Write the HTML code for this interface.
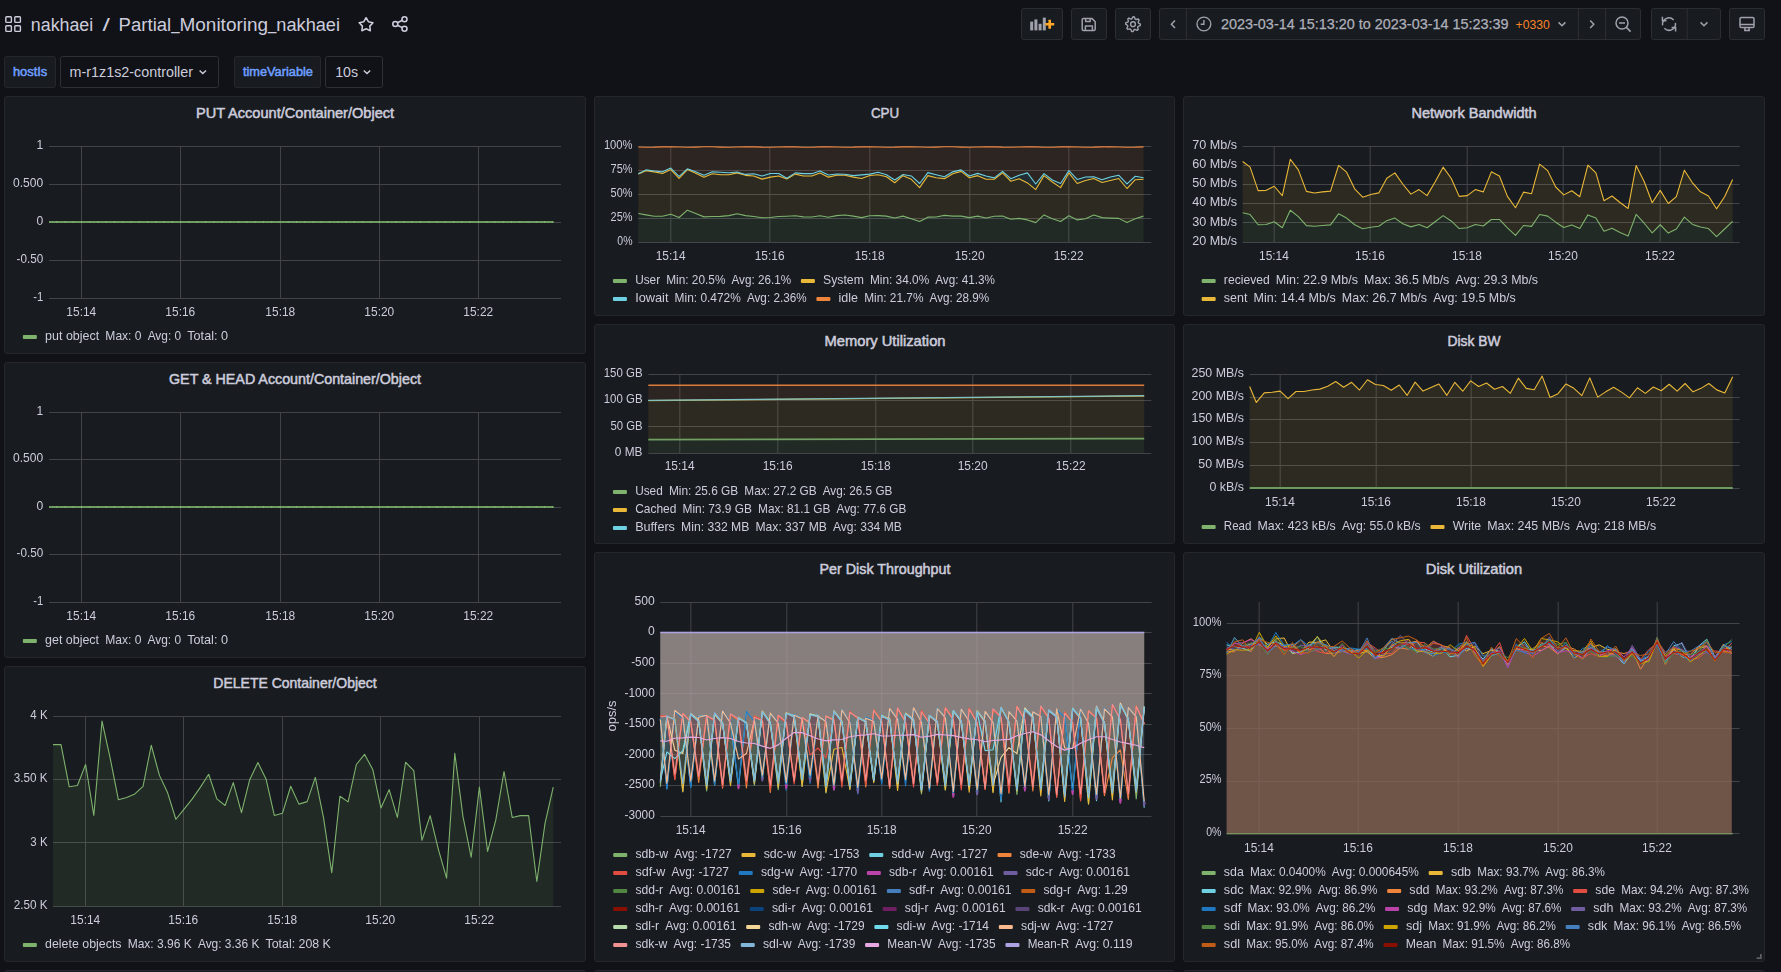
<!DOCTYPE html>
<html lang="en"><head><meta charset="utf-8"><title>Partial_Monitoring_nakhaei - Grafana</title>
<style>
html,body{margin:0;padding:0;background:#111217;overflow:hidden}
body{width:1781px;height:972px;position:relative;font-family:"Liberation Sans", sans-serif;color:#ccccdc}
svg{position:absolute;left:0;top:0;overflow:hidden}
svg text{font-family:"Liberation Sans", sans-serif;white-space:pre}
.pbody{will-change:transform}
.panel{position:absolute;background:#181b1f;border:1px solid #25272c;border-radius:3px;box-sizing:border-box;overflow:hidden}
</style></head><body>
<svg class="nav" width="1781" height="96" viewBox="0 0 1781 96">
<rect x="5.8" y="16.8" width="5.6" height="5.6" rx="0.8" fill="none" stroke="#ccccdc" stroke-width="1.4"/>
<rect x="14.8" y="16.8" width="5.6" height="5.6" rx="0.8" fill="none" stroke="#ccccdc" stroke-width="1.4"/>
<rect x="5.8" y="25.8" width="5.6" height="5.6" rx="0.8" fill="none" stroke="#ccccdc" stroke-width="1.4"/>
<rect x="14.8" y="25.8" width="5.6" height="5.6" rx="0.8" fill="none" stroke="#ccccdc" stroke-width="1.4"/>
<text x="30.80" y="30.60" font-size="18" text-anchor="start" font-weight="normal" fill="#ccccdc" textLength="62.46" lengthAdjust="spacingAndGlyphs">nakhaei</text>
<text x="102.40" y="30.60" font-size="18" text-anchor="start" font-weight="normal" fill="#ccccdc" textLength="7.42" lengthAdjust="spacingAndGlyphs">/</text>
<text x="118.60" y="30.60" font-size="18" text-anchor="start" font-weight="normal" fill="#ccccdc" textLength="52.63" lengthAdjust="spacingAndGlyphs">Partial</text>
<text x="171.23" y="29.00" font-size="18" text-anchor="start" font-weight="normal" fill="#ccccdc" textLength="8.28" lengthAdjust="spacingAndGlyphs">_</text>
<text x="179.51" y="30.60" font-size="18" text-anchor="start" font-weight="normal" fill="#ccccdc" textLength="88.57" lengthAdjust="spacingAndGlyphs">Monitoring</text>
<text x="268.08" y="29.00" font-size="18" text-anchor="start" font-weight="normal" fill="#ccccdc" textLength="8.28" lengthAdjust="spacingAndGlyphs">_</text>
<text x="276.35" y="30.60" font-size="18" text-anchor="start" font-weight="normal" fill="#ccccdc" textLength="63.65" lengthAdjust="spacingAndGlyphs">nakhaei</text>
<polygon points="366.10,17.70 368.39,21.74 372.95,22.68 369.81,26.11 370.33,30.72 366.10,28.80 361.87,30.72 362.39,26.11 359.25,22.68 363.81,21.74" fill="none" stroke="#ccccdc" stroke-width="1.55" stroke-linejoin="round"/>
<g fill="none" stroke="#ccccdc" stroke-width="1.55"><circle cx="404.5" cy="19.2" r="2.5"/><circle cx="395.3" cy="24" r="2.5"/><circle cx="404.5" cy="28.7" r="2.5"/><path d="M397.5 22.8 L402.3 20.3 M397.5 25.2 L402.3 27.6"/></g>
<rect x="1021.5" y="8.5" width="41.0" height="31" rx="2" fill="#181b1f" stroke="#2b2d33"/>
<rect x="1030.2" y="21.6" width="3" height="8.8" fill="#9fa1ac"/>
<rect x="1034.4" y="19.4" width="3" height="11.0" fill="#9fa1ac"/>
<rect x="1038.6" y="23.8" width="3" height="6.6" fill="#9fa1ac"/>
<rect x="1042.8" y="17.6" width="3" height="12.8" fill="#9fa1ac"/>
<path d="M1045.2 24.2 h9 M1049.7 19.7 v9" stroke="#ffa726" stroke-width="2.6" fill="none"/>
<rect x="1071.5" y="8.5" width="35.0" height="31" rx="2" fill="#181b1f" stroke="#2b2d33"/>
<g fill="none" stroke="#9fa1ac" stroke-width="1.5" stroke-linejoin="round"><path d="M1083.4 18.4 h8.4 l3.4 3.4 v7.4 a1.2 1.2 0 0 1 -1.2 1.2 h-10.6 a1.2 1.2 0 0 1 -1.2 -1.2 v-9.6 a1.2 1.2 0 0 1 1.2 -1.2 z"/><path d="M1085.4 30.2 v-4.2 h7 v4.2 M1085.6 18.6 v2.8 h4.6 v-2.8"/></g>
<rect x="1115.5" y="8.5" width="35.0" height="31" rx="2" fill="#181b1f" stroke="#2b2d33"/>
<polygon points="1133.00,16.80 1134.44,16.94 1135.14,19.03 1136.11,19.54 1138.23,18.97 1139.15,20.09 1138.17,22.06 1138.49,23.11 1140.40,24.20 1140.26,25.64 1138.17,26.34 1137.66,27.31 1138.23,29.43 1137.11,30.35 1135.14,29.37 1134.09,29.69 1133.00,31.60 1131.56,31.46 1130.86,29.37 1129.89,28.86 1127.77,29.43 1126.85,28.31 1127.83,26.34 1127.51,25.29 1125.60,24.20 1125.74,22.76 1127.83,22.06 1128.34,21.09 1127.77,18.97 1128.89,18.05 1130.86,19.03 1131.91,18.71" fill="none" stroke="#9fa1ac" stroke-width="1.4" stroke-linejoin="round"/>
<circle cx="1133" cy="24.2" r="2.4" fill="none" stroke="#9fa1ac" stroke-width="1.4"/>
<rect x="1159.5" y="8.5" width="481.0" height="31" rx="2" fill="#181b1f" stroke="#2b2d33"/>
<rect x="1186.0" y="9" width="1" height="30" fill="#2b2d33"/>
<rect x="1578.0" y="9" width="1" height="30" fill="#2b2d33"/>
<rect x="1605.0" y="9" width="1" height="30" fill="#2b2d33"/>
<path d="M1175 20.4 l-3.6 3.8 l3.6 3.8" fill="none" stroke="#9fa1ac" stroke-width="1.5"/>
<circle cx="1203.9" cy="24" r="6.9" fill="none" stroke="#9fa1ac" stroke-width="1.4"/>
<path d="M1203.9 20 v4.2 h-3.2" fill="none" stroke="#9fa1ac" stroke-width="1.4"/>
<text x="1221.00" y="29.00" font-size="14" text-anchor="start" font-weight="normal" fill="#adafba" stroke="#adafba" stroke-width="0.25" textLength="287.60" lengthAdjust="spacingAndGlyphs">2023-03-14 15:13:20 to 2023-03-14 15:23:39</text>
<text x="1515.60" y="28.60" font-size="12" text-anchor="start" font-weight="normal" fill="#f8852a" textLength="34.20" lengthAdjust="spacingAndGlyphs">+0330</text>
<path d="M1558.6 22.4 l3.4 3.4 l3.4 -3.4" fill="none" stroke="#9fa1ac" stroke-width="1.5"/>
<path d="M1590.2 20.4 l3.6 3.8 l-3.6 3.8" fill="none" stroke="#9fa1ac" stroke-width="1.5"/>
<circle cx="1622" cy="23" r="6" fill="none" stroke="#9fa1ac" stroke-width="1.5"/>
<path d="M1626.4 27.4 l4.2 4.2 M1619 23 h6" fill="none" stroke="#9fa1ac" stroke-width="1.5"/>
<rect x="1651.5" y="8.5" width="69.0" height="31" rx="2" fill="#181b1f" stroke="#2b2d33"/>
<rect x="1686.7" y="9" width="1" height="30" fill="#2b2d33"/>
<g fill="none" stroke="#9fa1ac" stroke-width="1.5"><path d="M1662.6 25.4 a6.4 6.4 0 0 1 11 -5.4 M1675.4 22.8 a6.4 6.4 0 0 1 -11 5.4"/><path d="M1662.4 16.8 v4 h4 M1675.6 31.4 v-4 h-4"/></g>
<path d="M1700.6 22.4 l3.4 3.4 l3.4 -3.4" fill="none" stroke="#9fa1ac" stroke-width="1.5"/>
<rect x="1729.5" y="8.5" width="35.0" height="31" rx="2" fill="#181b1f" stroke="#2b2d33"/>
<g fill="none" stroke="#9fa1ac" stroke-width="1.5" stroke-linejoin="round"><rect x="1740" y="17.4" width="14" height="10.2" rx="1.4"/><path d="M1740 24.4 h14 M1744 30.6 h6 M1745 27.8 v2.6 M1749 27.8 v2.6"/></g>
<rect x="4.5" y="56.5" width="51.0" height="31" rx="2" fill="#181b1f" stroke="#25272c"/>
<text x="12.90" y="75.80" font-size="12" text-anchor="start" font-weight="normal" fill="#6e9fff" stroke="#6e9fff" stroke-width="0.5" textLength="34.33" lengthAdjust="spacingAndGlyphs">hostIs</text>
<rect x="60.5" y="56.5" width="158.0" height="31" rx="2" fill="#111217" stroke="#2e3036"/>
<text x="69.60" y="77.00" font-size="14" text-anchor="start" font-weight="normal" fill="#ccccdc" textLength="123.40" lengthAdjust="spacingAndGlyphs">m-r1z1s2-controller</text>
<path d="M199.6 70.4 l3.2 3.2 l3.2 -3.2" fill="none" stroke="#ccccdc" stroke-width="1.4"/>
<rect x="234.5" y="56.5" width="86.0" height="31" rx="2" fill="#181b1f" stroke="#25272c"/>
<text x="242.90" y="75.80" font-size="12" text-anchor="start" font-weight="normal" fill="#6e9fff" stroke="#6e9fff" stroke-width="0.5" textLength="70.07" lengthAdjust="spacingAndGlyphs">timeVariable</text>
<rect x="325.5" y="56.5" width="57.0" height="31" rx="2" fill="#111217" stroke="#2e3036"/>
<text x="335.20" y="77.00" font-size="14" text-anchor="start" font-weight="normal" fill="#ccccdc" textLength="22.94" lengthAdjust="spacingAndGlyphs">10s</text>
<path d="M363.8 70.4 l3.2 3.2 l3.2 -3.2" fill="none" stroke="#ccccdc" stroke-width="1.4"/>
</svg>
<div class="panel" style="left:4.00px;top:96px;width:581.67px;height:258px">
<svg class="ptitle" width="581.67" height="30" viewBox="4.00 96 581.67 30" style="left:-1px;top:-1px"><text x="295.03" y="118.20" font-size="14" text-anchor="middle" font-weight="normal" fill="#ccccdc" stroke="#ccccdc" stroke-width="0.5" textLength="198.20" lengthAdjust="spacingAndGlyphs">PUT Account/Container/Object</text></svg>
<svg class="pbody" width="581.67" height="228" viewBox="4.00 126 581.67 228" style="left:-1px;top:29px">
<rect x="49.00" y="146" width="512.00" height="1" fill="#424449"/>
<rect x="49.00" y="184" width="512.00" height="1" fill="#424449"/>
<rect x="49.00" y="222" width="512.00" height="1" fill="#424449"/>
<rect x="49.00" y="260" width="512.00" height="1" fill="#424449"/>
<rect x="49.00" y="298" width="512.00" height="1" fill="#424449"/>
<rect x="81" y="146" width="1" height="153" fill="#424449"/>
<rect x="180" y="146" width="1" height="153" fill="#424449"/>
<rect x="280" y="146" width="1" height="153" fill="#424449"/>
<rect x="379" y="146" width="1" height="153" fill="#424449"/>
<rect x="478" y="146" width="1" height="153" fill="#424449"/>
<text x="43.20" y="148.90" font-size="12" text-anchor="end" font-weight="normal" fill="#ccccdc" textLength="6.74" lengthAdjust="spacingAndGlyphs">1</text>
<text x="43.20" y="186.90" font-size="12" text-anchor="end" font-weight="normal" fill="#ccccdc" textLength="30.11" lengthAdjust="spacingAndGlyphs">0.500</text>
<text x="43.20" y="224.90" font-size="12" text-anchor="end" font-weight="normal" fill="#ccccdc" textLength="6.74" lengthAdjust="spacingAndGlyphs">0</text>
<text x="43.20" y="262.90" font-size="12" text-anchor="end" font-weight="normal" fill="#ccccdc" textLength="26.68" lengthAdjust="spacingAndGlyphs">-0.50</text>
<text x="43.20" y="300.90" font-size="12" text-anchor="end" font-weight="normal" fill="#ccccdc" textLength="10.05" lengthAdjust="spacingAndGlyphs">-1</text>
<text x="81.30" y="316.20" font-size="12" text-anchor="middle" font-weight="normal" fill="#ccccdc" textLength="29.86" lengthAdjust="spacingAndGlyphs">15:14</text>
<text x="180.30" y="316.20" font-size="12" text-anchor="middle" font-weight="normal" fill="#ccccdc" textLength="29.86" lengthAdjust="spacingAndGlyphs">15:16</text>
<text x="280.30" y="316.20" font-size="12" text-anchor="middle" font-weight="normal" fill="#ccccdc" textLength="29.86" lengthAdjust="spacingAndGlyphs">15:18</text>
<text x="379.30" y="316.20" font-size="12" text-anchor="middle" font-weight="normal" fill="#ccccdc" textLength="29.86" lengthAdjust="spacingAndGlyphs">15:20</text>
<text x="478.30" y="316.20" font-size="12" text-anchor="middle" font-weight="normal" fill="#ccccdc" textLength="29.86" lengthAdjust="spacingAndGlyphs">15:22</text>
<rect x="49.00" y="221" width="504.40" height="2" fill="#6d9b60"/>
<rect x="56.17" y="221" width="1" height="2" fill="#7fb56c"/><rect x="64.44" y="221" width="1" height="2" fill="#7fb56c"/><rect x="72.71" y="221" width="1" height="2" fill="#7fb56c"/><rect x="80.98" y="221" width="1" height="2" fill="#7fb56c"/><rect x="89.25" y="221" width="1" height="2" fill="#7fb56c"/><rect x="97.51" y="221" width="1" height="2" fill="#7fb56c"/><rect x="105.78" y="221" width="1" height="2" fill="#7fb56c"/><rect x="114.05" y="221" width="1" height="2" fill="#7fb56c"/><rect x="122.32" y="221" width="1" height="2" fill="#7fb56c"/><rect x="130.59" y="221" width="1" height="2" fill="#7fb56c"/><rect x="138.86" y="221" width="1" height="2" fill="#7fb56c"/><rect x="147.13" y="221" width="1" height="2" fill="#7fb56c"/><rect x="155.40" y="221" width="1" height="2" fill="#7fb56c"/><rect x="163.67" y="221" width="1" height="2" fill="#7fb56c"/><rect x="171.94" y="221" width="1" height="2" fill="#7fb56c"/><rect x="180.20" y="221" width="1" height="2" fill="#7fb56c"/><rect x="188.47" y="221" width="1" height="2" fill="#7fb56c"/><rect x="196.74" y="221" width="1" height="2" fill="#7fb56c"/><rect x="205.01" y="221" width="1" height="2" fill="#7fb56c"/><rect x="213.28" y="221" width="1" height="2" fill="#7fb56c"/><rect x="221.55" y="221" width="1" height="2" fill="#7fb56c"/><rect x="229.82" y="221" width="1" height="2" fill="#7fb56c"/><rect x="238.09" y="221" width="1" height="2" fill="#7fb56c"/><rect x="246.36" y="221" width="1" height="2" fill="#7fb56c"/><rect x="254.62" y="221" width="1" height="2" fill="#7fb56c"/><rect x="262.89" y="221" width="1" height="2" fill="#7fb56c"/><rect x="271.16" y="221" width="1" height="2" fill="#7fb56c"/><rect x="279.43" y="221" width="1" height="2" fill="#7fb56c"/><rect x="287.70" y="221" width="1" height="2" fill="#7fb56c"/><rect x="295.97" y="221" width="1" height="2" fill="#7fb56c"/><rect x="304.24" y="221" width="1" height="2" fill="#7fb56c"/><rect x="312.51" y="221" width="1" height="2" fill="#7fb56c"/><rect x="320.78" y="221" width="1" height="2" fill="#7fb56c"/><rect x="329.05" y="221" width="1" height="2" fill="#7fb56c"/><rect x="337.31" y="221" width="1" height="2" fill="#7fb56c"/><rect x="345.58" y="221" width="1" height="2" fill="#7fb56c"/><rect x="353.85" y="221" width="1" height="2" fill="#7fb56c"/><rect x="362.12" y="221" width="1" height="2" fill="#7fb56c"/><rect x="370.39" y="221" width="1" height="2" fill="#7fb56c"/><rect x="378.66" y="221" width="1" height="2" fill="#7fb56c"/><rect x="386.93" y="221" width="1" height="2" fill="#7fb56c"/><rect x="395.20" y="221" width="1" height="2" fill="#7fb56c"/><rect x="403.47" y="221" width="1" height="2" fill="#7fb56c"/><rect x="411.74" y="221" width="1" height="2" fill="#7fb56c"/><rect x="420.00" y="221" width="1" height="2" fill="#7fb56c"/><rect x="428.27" y="221" width="1" height="2" fill="#7fb56c"/><rect x="436.54" y="221" width="1" height="2" fill="#7fb56c"/><rect x="444.81" y="221" width="1" height="2" fill="#7fb56c"/><rect x="453.08" y="221" width="1" height="2" fill="#7fb56c"/><rect x="461.35" y="221" width="1" height="2" fill="#7fb56c"/><rect x="469.62" y="221" width="1" height="2" fill="#7fb56c"/><rect x="477.89" y="221" width="1" height="2" fill="#7fb56c"/><rect x="486.16" y="221" width="1" height="2" fill="#7fb56c"/><rect x="494.43" y="221" width="1" height="2" fill="#7fb56c"/><rect x="502.69" y="221" width="1" height="2" fill="#7fb56c"/><rect x="510.96" y="221" width="1" height="2" fill="#7fb56c"/><rect x="519.23" y="221" width="1" height="2" fill="#7fb56c"/><rect x="527.50" y="221" width="1" height="2" fill="#7fb56c"/><rect x="535.77" y="221" width="1" height="2" fill="#7fb56c"/><rect x="544.04" y="221" width="1" height="2" fill="#7fb56c"/><rect x="552.31" y="221" width="1" height="2" fill="#7fb56c"/>
<rect x="22.85" y="335.00" width="14" height="4" rx="1" fill="#7EB26D"/>
<text x="45.05" y="339.70" font-size="12" text-anchor="start" font-weight="normal" fill="#ccccdc" textLength="54.19" lengthAdjust="spacingAndGlyphs">put object</text>
<text x="105.34" y="339.70" font-size="12" text-anchor="start" font-weight="normal" fill="#ccccdc" textLength="36.20" lengthAdjust="spacingAndGlyphs">Max: 0</text>
<text x="147.63" y="339.70" font-size="12" text-anchor="start" font-weight="normal" fill="#ccccdc" textLength="33.58" lengthAdjust="spacingAndGlyphs">Avg: 0</text>
<text x="187.31" y="339.70" font-size="12" text-anchor="start" font-weight="normal" fill="#ccccdc" textLength="40.69" lengthAdjust="spacingAndGlyphs">Total: 0</text>
</svg></div>
<div class="panel" style="left:4.00px;top:362px;width:581.67px;height:296px">
<svg class="ptitle" width="581.67" height="30" viewBox="4.00 362 581.67 30" style="left:-1px;top:-1px"><text x="295.03" y="384.20" font-size="14" text-anchor="middle" font-weight="normal" fill="#ccccdc" stroke="#ccccdc" stroke-width="0.5" textLength="252.00" lengthAdjust="spacingAndGlyphs">GET &amp; HEAD Account/Container/Object</text></svg>
<svg class="pbody" width="581.67" height="266" viewBox="4.00 392 581.67 266" style="left:-1px;top:29px">
<rect x="49.00" y="412" width="512.00" height="1" fill="#424449"/>
<rect x="49.00" y="459" width="512.00" height="1" fill="#424449"/>
<rect x="49.00" y="507" width="512.00" height="1" fill="#424449"/>
<rect x="49.00" y="554" width="512.00" height="1" fill="#424449"/>
<rect x="49.00" y="602" width="512.00" height="1" fill="#424449"/>
<rect x="81" y="412" width="1" height="191" fill="#424449"/>
<rect x="180" y="412" width="1" height="191" fill="#424449"/>
<rect x="280" y="412" width="1" height="191" fill="#424449"/>
<rect x="379" y="412" width="1" height="191" fill="#424449"/>
<rect x="478" y="412" width="1" height="191" fill="#424449"/>
<text x="43.20" y="414.90" font-size="12" text-anchor="end" font-weight="normal" fill="#ccccdc" textLength="6.74" lengthAdjust="spacingAndGlyphs">1</text>
<text x="43.20" y="462.40" font-size="12" text-anchor="end" font-weight="normal" fill="#ccccdc" textLength="30.11" lengthAdjust="spacingAndGlyphs">0.500</text>
<text x="43.20" y="509.90" font-size="12" text-anchor="end" font-weight="normal" fill="#ccccdc" textLength="6.74" lengthAdjust="spacingAndGlyphs">0</text>
<text x="43.20" y="557.40" font-size="12" text-anchor="end" font-weight="normal" fill="#ccccdc" textLength="26.68" lengthAdjust="spacingAndGlyphs">-0.50</text>
<text x="43.20" y="604.90" font-size="12" text-anchor="end" font-weight="normal" fill="#ccccdc" textLength="10.05" lengthAdjust="spacingAndGlyphs">-1</text>
<text x="81.30" y="620.20" font-size="12" text-anchor="middle" font-weight="normal" fill="#ccccdc" textLength="29.86" lengthAdjust="spacingAndGlyphs">15:14</text>
<text x="180.30" y="620.20" font-size="12" text-anchor="middle" font-weight="normal" fill="#ccccdc" textLength="29.86" lengthAdjust="spacingAndGlyphs">15:16</text>
<text x="280.30" y="620.20" font-size="12" text-anchor="middle" font-weight="normal" fill="#ccccdc" textLength="29.86" lengthAdjust="spacingAndGlyphs">15:18</text>
<text x="379.30" y="620.20" font-size="12" text-anchor="middle" font-weight="normal" fill="#ccccdc" textLength="29.86" lengthAdjust="spacingAndGlyphs">15:20</text>
<text x="478.30" y="620.20" font-size="12" text-anchor="middle" font-weight="normal" fill="#ccccdc" textLength="29.86" lengthAdjust="spacingAndGlyphs">15:22</text>
<rect x="49.00" y="506" width="504.40" height="2" fill="#6d9b60"/>
<rect x="56.17" y="506" width="1" height="2" fill="#7fb56c"/><rect x="64.44" y="506" width="1" height="2" fill="#7fb56c"/><rect x="72.71" y="506" width="1" height="2" fill="#7fb56c"/><rect x="80.98" y="506" width="1" height="2" fill="#7fb56c"/><rect x="89.25" y="506" width="1" height="2" fill="#7fb56c"/><rect x="97.51" y="506" width="1" height="2" fill="#7fb56c"/><rect x="105.78" y="506" width="1" height="2" fill="#7fb56c"/><rect x="114.05" y="506" width="1" height="2" fill="#7fb56c"/><rect x="122.32" y="506" width="1" height="2" fill="#7fb56c"/><rect x="130.59" y="506" width="1" height="2" fill="#7fb56c"/><rect x="138.86" y="506" width="1" height="2" fill="#7fb56c"/><rect x="147.13" y="506" width="1" height="2" fill="#7fb56c"/><rect x="155.40" y="506" width="1" height="2" fill="#7fb56c"/><rect x="163.67" y="506" width="1" height="2" fill="#7fb56c"/><rect x="171.94" y="506" width="1" height="2" fill="#7fb56c"/><rect x="180.20" y="506" width="1" height="2" fill="#7fb56c"/><rect x="188.47" y="506" width="1" height="2" fill="#7fb56c"/><rect x="196.74" y="506" width="1" height="2" fill="#7fb56c"/><rect x="205.01" y="506" width="1" height="2" fill="#7fb56c"/><rect x="213.28" y="506" width="1" height="2" fill="#7fb56c"/><rect x="221.55" y="506" width="1" height="2" fill="#7fb56c"/><rect x="229.82" y="506" width="1" height="2" fill="#7fb56c"/><rect x="238.09" y="506" width="1" height="2" fill="#7fb56c"/><rect x="246.36" y="506" width="1" height="2" fill="#7fb56c"/><rect x="254.62" y="506" width="1" height="2" fill="#7fb56c"/><rect x="262.89" y="506" width="1" height="2" fill="#7fb56c"/><rect x="271.16" y="506" width="1" height="2" fill="#7fb56c"/><rect x="279.43" y="506" width="1" height="2" fill="#7fb56c"/><rect x="287.70" y="506" width="1" height="2" fill="#7fb56c"/><rect x="295.97" y="506" width="1" height="2" fill="#7fb56c"/><rect x="304.24" y="506" width="1" height="2" fill="#7fb56c"/><rect x="312.51" y="506" width="1" height="2" fill="#7fb56c"/><rect x="320.78" y="506" width="1" height="2" fill="#7fb56c"/><rect x="329.05" y="506" width="1" height="2" fill="#7fb56c"/><rect x="337.31" y="506" width="1" height="2" fill="#7fb56c"/><rect x="345.58" y="506" width="1" height="2" fill="#7fb56c"/><rect x="353.85" y="506" width="1" height="2" fill="#7fb56c"/><rect x="362.12" y="506" width="1" height="2" fill="#7fb56c"/><rect x="370.39" y="506" width="1" height="2" fill="#7fb56c"/><rect x="378.66" y="506" width="1" height="2" fill="#7fb56c"/><rect x="386.93" y="506" width="1" height="2" fill="#7fb56c"/><rect x="395.20" y="506" width="1" height="2" fill="#7fb56c"/><rect x="403.47" y="506" width="1" height="2" fill="#7fb56c"/><rect x="411.74" y="506" width="1" height="2" fill="#7fb56c"/><rect x="420.00" y="506" width="1" height="2" fill="#7fb56c"/><rect x="428.27" y="506" width="1" height="2" fill="#7fb56c"/><rect x="436.54" y="506" width="1" height="2" fill="#7fb56c"/><rect x="444.81" y="506" width="1" height="2" fill="#7fb56c"/><rect x="453.08" y="506" width="1" height="2" fill="#7fb56c"/><rect x="461.35" y="506" width="1" height="2" fill="#7fb56c"/><rect x="469.62" y="506" width="1" height="2" fill="#7fb56c"/><rect x="477.89" y="506" width="1" height="2" fill="#7fb56c"/><rect x="486.16" y="506" width="1" height="2" fill="#7fb56c"/><rect x="494.43" y="506" width="1" height="2" fill="#7fb56c"/><rect x="502.69" y="506" width="1" height="2" fill="#7fb56c"/><rect x="510.96" y="506" width="1" height="2" fill="#7fb56c"/><rect x="519.23" y="506" width="1" height="2" fill="#7fb56c"/><rect x="527.50" y="506" width="1" height="2" fill="#7fb56c"/><rect x="535.77" y="506" width="1" height="2" fill="#7fb56c"/><rect x="544.04" y="506" width="1" height="2" fill="#7fb56c"/><rect x="552.31" y="506" width="1" height="2" fill="#7fb56c"/>
<rect x="22.85" y="639.00" width="14" height="4" rx="1" fill="#7EB26D"/>
<text x="45.05" y="643.70" font-size="12" text-anchor="start" font-weight="normal" fill="#ccccdc" textLength="54.01" lengthAdjust="spacingAndGlyphs">get object</text>
<text x="105.16" y="643.70" font-size="12" text-anchor="start" font-weight="normal" fill="#ccccdc" textLength="36.26" lengthAdjust="spacingAndGlyphs">Max: 0</text>
<text x="147.52" y="643.70" font-size="12" text-anchor="start" font-weight="normal" fill="#ccccdc" textLength="33.63" lengthAdjust="spacingAndGlyphs">Avg: 0</text>
<text x="187.25" y="643.70" font-size="12" text-anchor="start" font-weight="normal" fill="#ccccdc" textLength="40.75" lengthAdjust="spacingAndGlyphs">Total: 0</text>
</svg></div>
<div class="panel" style="left:4.00px;top:666px;width:581.67px;height:296px">
<svg class="ptitle" width="581.67" height="30" viewBox="4.00 666 581.67 30" style="left:-1px;top:-1px"><text x="295.03" y="688.20" font-size="14" text-anchor="middle" font-weight="normal" fill="#ccccdc" stroke="#ccccdc" stroke-width="0.5" textLength="163.40" lengthAdjust="spacingAndGlyphs">DELETE Container/Object</text></svg>
<svg class="pbody" width="581.67" height="266" viewBox="4.00 696 581.67 266" style="left:-1px;top:29px">
<rect x="53.00" y="716" width="508.00" height="1" fill="#424449"/>
<rect x="53.00" y="779" width="508.00" height="1" fill="#424449"/>
<rect x="53.00" y="842" width="508.00" height="1" fill="#424449"/>
<rect x="53.00" y="906" width="508.00" height="1" fill="#424449"/>
<rect x="85" y="716" width="1" height="191" fill="#424449"/>
<rect x="183" y="716" width="1" height="191" fill="#424449"/>
<rect x="282" y="716" width="1" height="191" fill="#424449"/>
<rect x="380" y="716" width="1" height="191" fill="#424449"/>
<rect x="479" y="716" width="1" height="191" fill="#424449"/>
<path d="M53.00 744.59 L61.00 744.59 L69.21 786.68 L77.41 785.55 L85.62 764.50 L93.82 815.42 L102.02 721.05 L110.23 758.39 L118.43 799.81 L126.64 797.54 L134.84 793.92 L143.04 786.45 L151.25 745.26 L159.45 775.36 L167.66 792.79 L175.86 819.27 L184.06 809.09 L192.27 798.90 L200.47 787.13 L208.68 774.23 L216.88 798.90 L225.08 805.47 L233.29 782.61 L241.49 812.71 L249.70 779.67 L257.90 762.46 L266.10 779.21 L274.31 815.42 L282.51 813.16 L290.72 786.23 L298.92 804.11 L307.12 801.62 L315.33 777.40 L323.53 817.69 L331.74 872.68 L339.94 796.19 L348.14 801.84 L356.35 764.50 L364.55 754.32 L372.76 769.48 L380.96 807.96 L389.16 789.62 L397.37 817.46 L405.57 762.24 L413.78 770.61 L421.98 840.32 L430.18 815.65 L438.39 849.37 L446.59 878.11 L454.80 753.41 L463.00 816.56 L471.20 857.29 L479.41 787.13 L487.61 851.41 L495.82 819.95 L504.02 771.52 L512.22 817.46 L520.43 815.65 L528.63 815.65 L536.84 881.51 L545.04 823.35 L553.24 787.13 L553.24 906.50 L53.00 906.50 Z" fill="#7EB26D" fill-opacity="0.1"/>
<path d="M53.00 744.59 L61.00 744.59 L69.21 786.68 L77.41 785.55 L85.62 764.50 L93.82 815.42 L102.02 721.05 L110.23 758.39 L118.43 799.81 L126.64 797.54 L134.84 793.92 L143.04 786.45 L151.25 745.26 L159.45 775.36 L167.66 792.79 L175.86 819.27 L184.06 809.09 L192.27 798.90 L200.47 787.13 L208.68 774.23 L216.88 798.90 L225.08 805.47 L233.29 782.61 L241.49 812.71 L249.70 779.67 L257.90 762.46 L266.10 779.21 L274.31 815.42 L282.51 813.16 L290.72 786.23 L298.92 804.11 L307.12 801.62 L315.33 777.40 L323.53 817.69 L331.74 872.68 L339.94 796.19 L348.14 801.84 L356.35 764.50 L364.55 754.32 L372.76 769.48 L380.96 807.96 L389.16 789.62 L397.37 817.46 L405.57 762.24 L413.78 770.61 L421.98 840.32 L430.18 815.65 L438.39 849.37 L446.59 878.11 L454.80 753.41 L463.00 816.56 L471.20 857.29 L479.41 787.13 L487.61 851.41 L495.82 819.95 L504.02 771.52 L512.22 817.46 L520.43 815.65 L528.63 815.65 L536.84 881.51 L545.04 823.35 L553.24 787.13" fill="none" stroke="#7EB26D" stroke-width="1.1" stroke-linejoin="round"/>
<text x="47.60" y="718.90" font-size="12" text-anchor="end" font-weight="normal" fill="#ccccdc" textLength="17.23" lengthAdjust="spacingAndGlyphs">4 K</text>
<text x="47.60" y="782.23" font-size="12" text-anchor="end" font-weight="normal" fill="#ccccdc" textLength="33.87" lengthAdjust="spacingAndGlyphs">3.50 K</text>
<text x="47.60" y="845.57" font-size="12" text-anchor="end" font-weight="normal" fill="#ccccdc" textLength="17.23" lengthAdjust="spacingAndGlyphs">3 K</text>
<text x="47.60" y="908.90" font-size="12" text-anchor="end" font-weight="normal" fill="#ccccdc" textLength="33.87" lengthAdjust="spacingAndGlyphs">2.50 K</text>
<text x="85.30" y="924.20" font-size="12" text-anchor="middle" font-weight="normal" fill="#ccccdc" textLength="29.86" lengthAdjust="spacingAndGlyphs">15:14</text>
<text x="183.30" y="924.20" font-size="12" text-anchor="middle" font-weight="normal" fill="#ccccdc" textLength="29.86" lengthAdjust="spacingAndGlyphs">15:16</text>
<text x="282.30" y="924.20" font-size="12" text-anchor="middle" font-weight="normal" fill="#ccccdc" textLength="29.86" lengthAdjust="spacingAndGlyphs">15:18</text>
<text x="380.30" y="924.20" font-size="12" text-anchor="middle" font-weight="normal" fill="#ccccdc" textLength="29.86" lengthAdjust="spacingAndGlyphs">15:20</text>
<text x="479.30" y="924.20" font-size="12" text-anchor="middle" font-weight="normal" fill="#ccccdc" textLength="29.86" lengthAdjust="spacingAndGlyphs">15:22</text>
<rect x="22.85" y="943.00" width="14" height="4" rx="1" fill="#7EB26D"/>
<text x="45.05" y="947.70" font-size="12" text-anchor="start" font-weight="normal" fill="#ccccdc" textLength="76.53" lengthAdjust="spacingAndGlyphs">delete objects</text>
<text x="127.68" y="947.70" font-size="12" text-anchor="start" font-weight="normal" fill="#ccccdc" textLength="64.12" lengthAdjust="spacingAndGlyphs">Max: 3.96 K</text>
<text x="197.91" y="947.70" font-size="12" text-anchor="start" font-weight="normal" fill="#ccccdc" textLength="61.49" lengthAdjust="spacingAndGlyphs">Avg: 3.36 K</text>
<text x="265.49" y="947.70" font-size="12" text-anchor="start" font-weight="normal" fill="#ccccdc" textLength="65.41" lengthAdjust="spacingAndGlyphs">Total: 208 K</text>
</svg></div>
<div class="panel" style="left:593.67px;top:96px;width:581.67px;height:220px">
<svg class="ptitle" width="581.67" height="30" viewBox="593.67 96 581.67 30" style="left:-1px;top:-1px"><text x="884.70" y="118.20" font-size="14" text-anchor="middle" font-weight="normal" fill="#ccccdc" stroke="#ccccdc" stroke-width="0.5" textLength="28.20" lengthAdjust="spacingAndGlyphs">CPU</text></svg>
<svg class="pbody" width="581.67" height="190" viewBox="593.67 126 581.67 190" style="left:-1px;top:29px">
<rect x="638.00" y="146" width="513.00" height="1" fill="#424449"/>
<rect x="638.00" y="170" width="513.00" height="1" fill="#424449"/>
<rect x="638.00" y="194" width="513.00" height="1" fill="#424449"/>
<rect x="638.00" y="218" width="513.00" height="1" fill="#424449"/>
<rect x="638.00" y="242" width="513.00" height="1" fill="#424449"/>
<rect x="670" y="146" width="1" height="97" fill="#424449"/>
<rect x="769" y="146" width="1" height="97" fill="#424449"/>
<rect x="869" y="146" width="1" height="97" fill="#424449"/>
<rect x="969" y="146" width="1" height="97" fill="#424449"/>
<rect x="1068" y="146" width="1" height="97" fill="#424449"/>
<path d="M638.00 213.53 L645.59 214.90 L653.89 216.26 L662.18 216.26 L670.48 214.29 L678.77 217.47 L687.06 210.20 L695.36 213.53 L703.65 216.87 L711.95 216.56 L720.24 216.41 L728.53 215.65 L736.83 213.68 L745.12 215.65 L753.42 216.56 L761.71 217.78 L770.00 217.47 L778.30 216.56 L786.59 216.26 L794.89 215.81 L803.18 216.87 L811.47 217.02 L819.77 215.81 L828.06 217.32 L836.36 215.65 L844.65 215.05 L852.94 216.11 L861.24 217.63 L869.53 215.81 L877.83 215.65 L886.12 216.11 L894.41 218.08 L902.71 216.11 L911.00 218.69 L919.30 221.42 L927.59 217.17 L935.88 217.02 L944.18 215.35 L952.47 216.11 L960.77 216.11 L969.06 217.63 L977.35 216.11 L985.65 218.08 L993.94 216.26 L1002.24 216.11 L1010.53 219.29 L1018.82 218.38 L1027.12 219.90 L1035.41 222.63 L1043.71 214.90 L1052.00 218.69 L1060.29 221.42 L1068.59 215.81 L1076.88 219.90 L1085.18 218.69 L1093.47 215.05 L1101.76 217.63 L1110.06 218.08 L1118.35 218.38 L1126.65 222.48 L1134.94 218.69 L1143.23 216.11 L1143.23 242.20 L638.00 242.20 Z" fill="#7EB26D" fill-opacity="0.1"/>
<path d="M638.00 174.11 L645.59 170.63 L653.89 171.84 L662.18 173.51 L670.48 169.57 L678.77 178.36 L687.06 169.57 L695.36 173.20 L703.65 177.15 L711.95 173.81 L720.24 174.72 L728.53 174.72 L736.83 172.90 L745.12 175.33 L753.42 175.93 L761.71 179.12 L770.00 177.15 L778.30 175.93 L786.59 178.97 L794.89 174.11 L803.18 175.93 L811.47 175.93 L819.77 172.90 L828.06 177.15 L836.36 175.18 L844.65 175.18 L852.94 177.15 L861.24 178.51 L869.53 175.48 L877.83 174.72 L886.12 176.69 L894.41 182.76 L902.71 175.63 L911.00 179.27 L919.30 187.61 L927.59 175.63 L935.88 177.75 L944.18 178.66 L952.47 173.66 L960.77 171.39 L969.06 177.75 L977.35 175.63 L985.65 179.27 L993.94 179.27 L1002.24 172.90 L1010.53 181.24 L1018.82 178.66 L1027.12 182.91 L1035.41 189.58 L1043.71 175.63 L1052.00 182.00 L1060.29 187.61 L1068.59 172.90 L1076.88 183.51 L1085.18 180.48 L1093.47 178.51 L1101.76 182.45 L1110.06 180.48 L1118.35 178.51 L1126.65 188.52 L1134.94 179.72 L1143.23 179.27 L1143.23 216.11 L1134.94 218.69 L1126.65 222.48 L1118.35 218.38 L1110.06 218.08 L1101.76 217.63 L1093.47 215.05 L1085.18 218.69 L1076.88 219.90 L1068.59 215.81 L1060.29 221.42 L1052.00 218.69 L1043.71 214.90 L1035.41 222.63 L1027.12 219.90 L1018.82 218.38 L1010.53 219.29 L1002.24 216.11 L993.94 216.26 L985.65 218.08 L977.35 216.11 L969.06 217.63 L960.77 216.11 L952.47 216.11 L944.18 215.35 L935.88 217.02 L927.59 217.17 L919.30 221.42 L911.00 218.69 L902.71 216.11 L894.41 218.08 L886.12 216.11 L877.83 215.65 L869.53 215.81 L861.24 217.63 L852.94 216.11 L844.65 215.05 L836.36 215.65 L828.06 217.32 L819.77 215.81 L811.47 217.02 L803.18 216.87 L794.89 215.81 L786.59 216.26 L778.30 216.56 L770.00 217.47 L761.71 217.78 L753.42 216.56 L745.12 215.65 L736.83 213.68 L728.53 215.65 L720.24 216.41 L711.95 216.56 L703.65 216.87 L695.36 213.53 L687.06 210.20 L678.77 217.47 L670.48 214.29 L662.18 216.26 L653.89 216.26 L645.59 214.90 L638.00 213.53 Z" fill="#EAB839" fill-opacity="0.1"/>
<path d="M638.00 173.66 L645.59 169.87 L653.89 170.93 L662.18 171.84 L670.48 168.05 L678.77 176.39 L687.06 168.81 L695.36 171.84 L703.65 175.18 L711.95 171.84 L720.24 172.30 L728.53 172.75 L736.83 171.99 L745.12 174.42 L753.42 173.81 L761.71 176.09 L770.00 173.51 L778.30 173.51 L786.59 178.21 L794.89 172.90 L803.18 173.66 L811.47 173.66 L819.77 171.08 L828.06 175.02 L836.36 173.96 L844.65 174.27 L852.94 175.63 L861.24 174.87 L869.53 174.11 L877.83 172.30 L886.12 174.72 L894.41 180.03 L902.71 174.42 L911.00 175.93 L919.30 183.51 L927.59 172.60 L935.88 174.72 L944.18 176.69 L952.47 171.84 L960.77 169.87 L969.06 175.93 L977.35 173.36 L985.65 175.93 L993.94 177.90 L1002.24 171.39 L1010.53 178.66 L1018.82 175.18 L1027.12 172.90 L1035.41 183.97 L1043.71 173.66 L1052.00 180.03 L1060.29 183.51 L1068.59 170.63 L1076.88 179.42 L1085.18 177.00 L1093.47 176.69 L1101.76 179.72 L1110.06 177.00 L1118.35 175.18 L1126.65 183.97 L1134.94 176.24 L1143.23 177.75 L1143.23 179.27 L1134.94 179.72 L1126.65 188.52 L1118.35 178.51 L1110.06 180.48 L1101.76 182.45 L1093.47 178.51 L1085.18 180.48 L1076.88 183.51 L1068.59 172.90 L1060.29 187.61 L1052.00 182.00 L1043.71 175.63 L1035.41 189.58 L1027.12 182.91 L1018.82 178.66 L1010.53 181.24 L1002.24 172.90 L993.94 179.27 L985.65 179.27 L977.35 175.63 L969.06 177.75 L960.77 171.39 L952.47 173.66 L944.18 178.66 L935.88 177.75 L927.59 175.63 L919.30 187.61 L911.00 179.27 L902.71 175.63 L894.41 182.76 L886.12 176.69 L877.83 174.72 L869.53 175.48 L861.24 178.51 L852.94 177.15 L844.65 175.18 L836.36 175.18 L828.06 177.15 L819.77 172.90 L811.47 175.93 L803.18 175.93 L794.89 174.11 L786.59 178.97 L778.30 175.93 L770.00 177.15 L761.71 179.12 L753.42 175.93 L745.12 175.33 L736.83 172.90 L728.53 174.72 L720.24 174.72 L711.95 173.81 L703.65 177.15 L695.36 173.20 L687.06 169.57 L678.77 178.36 L670.48 169.57 L662.18 173.51 L653.89 171.84 L645.59 170.63 L638.00 174.11 Z" fill="#6ED0E0" fill-opacity="0.1"/>
<path d="M638.00 147.00 L645.59 147.24 L653.89 147.13 L662.18 146.83 L670.48 146.78 L678.77 147.05 L687.06 147.25 L695.36 147.08 L703.65 146.79 L711.95 146.81 L720.24 147.11 L728.53 147.25 L736.83 147.03 L745.12 146.77 L753.42 146.85 L761.71 147.15 L770.00 147.23 L778.30 146.97 L786.59 146.75 L794.89 146.90 L803.18 147.19 L811.47 147.21 L819.77 146.92 L828.06 146.75 L836.36 146.95 L844.65 147.22 L852.94 147.17 L861.24 146.87 L869.53 146.76 L877.83 147.00 L886.12 147.24 L894.41 147.13 L902.71 146.83 L911.00 146.78 L919.30 147.05 L927.59 147.25 L935.88 147.08 L944.18 146.79 L952.47 146.81 L960.77 147.11 L969.06 147.25 L977.35 147.03 L985.65 146.77 L993.94 146.85 L1002.24 147.15 L1010.53 147.23 L1018.82 146.97 L1027.12 146.75 L1035.41 146.90 L1043.71 147.19 L1052.00 147.21 L1060.29 146.92 L1068.59 146.75 L1076.88 146.95 L1085.18 147.22 L1093.47 147.17 L1101.76 146.87 L1110.06 146.76 L1118.35 147.00 L1126.65 147.24 L1134.94 147.13 L1143.23 146.83 L1143.23 177.75 L1134.94 176.24 L1126.65 183.97 L1118.35 175.18 L1110.06 177.00 L1101.76 179.72 L1093.47 176.69 L1085.18 177.00 L1076.88 179.42 L1068.59 170.63 L1060.29 183.51 L1052.00 180.03 L1043.71 173.66 L1035.41 183.97 L1027.12 172.90 L1018.82 175.18 L1010.53 178.66 L1002.24 171.39 L993.94 177.90 L985.65 175.93 L977.35 173.36 L969.06 175.93 L960.77 169.87 L952.47 171.84 L944.18 176.69 L935.88 174.72 L927.59 172.60 L919.30 183.51 L911.00 175.93 L902.71 174.42 L894.41 180.03 L886.12 174.72 L877.83 172.30 L869.53 174.11 L861.24 174.87 L852.94 175.63 L844.65 174.27 L836.36 173.96 L828.06 175.02 L819.77 171.08 L811.47 173.66 L803.18 173.66 L794.89 172.90 L786.59 178.21 L778.30 173.51 L770.00 173.51 L761.71 176.09 L753.42 173.81 L745.12 174.42 L736.83 171.99 L728.53 172.75 L720.24 172.30 L711.95 171.84 L703.65 175.18 L695.36 171.84 L687.06 168.81 L678.77 176.39 L670.48 168.05 L662.18 171.84 L653.89 170.93 L645.59 169.87 L638.00 173.66 Z" fill="#EF843C" fill-opacity="0.1"/>
<path d="M638.00 213.53 L645.59 214.90 L653.89 216.26 L662.18 216.26 L670.48 214.29 L678.77 217.47 L687.06 210.20 L695.36 213.53 L703.65 216.87 L711.95 216.56 L720.24 216.41 L728.53 215.65 L736.83 213.68 L745.12 215.65 L753.42 216.56 L761.71 217.78 L770.00 217.47 L778.30 216.56 L786.59 216.26 L794.89 215.81 L803.18 216.87 L811.47 217.02 L819.77 215.81 L828.06 217.32 L836.36 215.65 L844.65 215.05 L852.94 216.11 L861.24 217.63 L869.53 215.81 L877.83 215.65 L886.12 216.11 L894.41 218.08 L902.71 216.11 L911.00 218.69 L919.30 221.42 L927.59 217.17 L935.88 217.02 L944.18 215.35 L952.47 216.11 L960.77 216.11 L969.06 217.63 L977.35 216.11 L985.65 218.08 L993.94 216.26 L1002.24 216.11 L1010.53 219.29 L1018.82 218.38 L1027.12 219.90 L1035.41 222.63 L1043.71 214.90 L1052.00 218.69 L1060.29 221.42 L1068.59 215.81 L1076.88 219.90 L1085.18 218.69 L1093.47 215.05 L1101.76 217.63 L1110.06 218.08 L1118.35 218.38 L1126.65 222.48 L1134.94 218.69 L1143.23 216.11" fill="none" stroke="#7EB26D" stroke-width="1.1" stroke-linejoin="round"/>
<path d="M638.00 174.11 L645.59 170.63 L653.89 171.84 L662.18 173.51 L670.48 169.57 L678.77 178.36 L687.06 169.57 L695.36 173.20 L703.65 177.15 L711.95 173.81 L720.24 174.72 L728.53 174.72 L736.83 172.90 L745.12 175.33 L753.42 175.93 L761.71 179.12 L770.00 177.15 L778.30 175.93 L786.59 178.97 L794.89 174.11 L803.18 175.93 L811.47 175.93 L819.77 172.90 L828.06 177.15 L836.36 175.18 L844.65 175.18 L852.94 177.15 L861.24 178.51 L869.53 175.48 L877.83 174.72 L886.12 176.69 L894.41 182.76 L902.71 175.63 L911.00 179.27 L919.30 187.61 L927.59 175.63 L935.88 177.75 L944.18 178.66 L952.47 173.66 L960.77 171.39 L969.06 177.75 L977.35 175.63 L985.65 179.27 L993.94 179.27 L1002.24 172.90 L1010.53 181.24 L1018.82 178.66 L1027.12 182.91 L1035.41 189.58 L1043.71 175.63 L1052.00 182.00 L1060.29 187.61 L1068.59 172.90 L1076.88 183.51 L1085.18 180.48 L1093.47 178.51 L1101.76 182.45 L1110.06 180.48 L1118.35 178.51 L1126.65 188.52 L1134.94 179.72 L1143.23 179.27" fill="none" stroke="#EAB839" stroke-width="1.1" stroke-linejoin="round"/>
<path d="M638.00 173.66 L645.59 169.87 L653.89 170.93 L662.18 171.84 L670.48 168.05 L678.77 176.39 L687.06 168.81 L695.36 171.84 L703.65 175.18 L711.95 171.84 L720.24 172.30 L728.53 172.75 L736.83 171.99 L745.12 174.42 L753.42 173.81 L761.71 176.09 L770.00 173.51 L778.30 173.51 L786.59 178.21 L794.89 172.90 L803.18 173.66 L811.47 173.66 L819.77 171.08 L828.06 175.02 L836.36 173.96 L844.65 174.27 L852.94 175.63 L861.24 174.87 L869.53 174.11 L877.83 172.30 L886.12 174.72 L894.41 180.03 L902.71 174.42 L911.00 175.93 L919.30 183.51 L927.59 172.60 L935.88 174.72 L944.18 176.69 L952.47 171.84 L960.77 169.87 L969.06 175.93 L977.35 173.36 L985.65 175.93 L993.94 177.90 L1002.24 171.39 L1010.53 178.66 L1018.82 175.18 L1027.12 172.90 L1035.41 183.97 L1043.71 173.66 L1052.00 180.03 L1060.29 183.51 L1068.59 170.63 L1076.88 179.42 L1085.18 177.00 L1093.47 176.69 L1101.76 179.72 L1110.06 177.00 L1118.35 175.18 L1126.65 183.97 L1134.94 176.24 L1143.23 177.75" fill="none" stroke="#6ED0E0" stroke-width="1.1" stroke-linejoin="round"/>
<path d="M638.00 147.00 L645.59 147.24 L653.89 147.13 L662.18 146.83 L670.48 146.78 L678.77 147.05 L687.06 147.25 L695.36 147.08 L703.65 146.79 L711.95 146.81 L720.24 147.11 L728.53 147.25 L736.83 147.03 L745.12 146.77 L753.42 146.85 L761.71 147.15 L770.00 147.23 L778.30 146.97 L786.59 146.75 L794.89 146.90 L803.18 147.19 L811.47 147.21 L819.77 146.92 L828.06 146.75 L836.36 146.95 L844.65 147.22 L852.94 147.17 L861.24 146.87 L869.53 146.76 L877.83 147.00 L886.12 147.24 L894.41 147.13 L902.71 146.83 L911.00 146.78 L919.30 147.05 L927.59 147.25 L935.88 147.08 L944.18 146.79 L952.47 146.81 L960.77 147.11 L969.06 147.25 L977.35 147.03 L985.65 146.77 L993.94 146.85 L1002.24 147.15 L1010.53 147.23 L1018.82 146.97 L1027.12 146.75 L1035.41 146.90 L1043.71 147.19 L1052.00 147.21 L1060.29 146.92 L1068.59 146.75 L1076.88 146.95 L1085.18 147.22 L1093.47 147.17 L1101.76 146.87 L1110.06 146.76 L1118.35 147.00 L1126.65 147.24 L1134.94 147.13 L1143.23 146.83" fill="none" stroke="#EF843C" stroke-width="1.1" stroke-linejoin="round"/>
<text x="632.20" y="148.90" font-size="12" text-anchor="end" font-weight="normal" fill="#ccccdc" textLength="28.65" lengthAdjust="spacingAndGlyphs">100%</text>
<text x="632.20" y="172.90" font-size="12" text-anchor="end" font-weight="normal" fill="#ccccdc" textLength="21.91" lengthAdjust="spacingAndGlyphs">75%</text>
<text x="632.20" y="196.90" font-size="12" text-anchor="end" font-weight="normal" fill="#ccccdc" textLength="21.91" lengthAdjust="spacingAndGlyphs">50%</text>
<text x="632.20" y="220.90" font-size="12" text-anchor="end" font-weight="normal" fill="#ccccdc" textLength="21.91" lengthAdjust="spacingAndGlyphs">25%</text>
<text x="632.20" y="244.90" font-size="12" text-anchor="end" font-weight="normal" fill="#ccccdc" textLength="15.18" lengthAdjust="spacingAndGlyphs">0%</text>
<text x="670.30" y="260.20" font-size="12" text-anchor="middle" font-weight="normal" fill="#ccccdc" textLength="29.86" lengthAdjust="spacingAndGlyphs">15:14</text>
<text x="769.30" y="260.20" font-size="12" text-anchor="middle" font-weight="normal" fill="#ccccdc" textLength="29.86" lengthAdjust="spacingAndGlyphs">15:16</text>
<text x="869.30" y="260.20" font-size="12" text-anchor="middle" font-weight="normal" fill="#ccccdc" textLength="29.86" lengthAdjust="spacingAndGlyphs">15:18</text>
<text x="969.30" y="260.20" font-size="12" text-anchor="middle" font-weight="normal" fill="#ccccdc" textLength="29.86" lengthAdjust="spacingAndGlyphs">15:20</text>
<text x="1068.30" y="260.20" font-size="12" text-anchor="middle" font-weight="normal" fill="#ccccdc" textLength="29.86" lengthAdjust="spacingAndGlyphs">15:22</text>
<rect x="612.60" y="279.00" width="14" height="4" rx="1" fill="#7EB26D"/>
<text x="634.80" y="283.70" font-size="12" text-anchor="start" font-weight="normal" fill="#ccccdc" textLength="25.02" lengthAdjust="spacingAndGlyphs">User</text>
<text x="665.92" y="283.70" font-size="12" text-anchor="start" font-weight="normal" fill="#ccccdc" textLength="59.18" lengthAdjust="spacingAndGlyphs">Min: 20.5%</text>
<text x="731.20" y="283.70" font-size="12" text-anchor="start" font-weight="normal" fill="#ccccdc" textLength="59.56" lengthAdjust="spacingAndGlyphs">Avg: 26.1%</text>
<rect x="800.56" y="279.00" width="14" height="4" rx="1" fill="#EAB839"/>
<text x="822.76" y="283.70" font-size="12" text-anchor="start" font-weight="normal" fill="#ccccdc" textLength="40.80" lengthAdjust="spacingAndGlyphs">System</text>
<text x="869.66" y="283.70" font-size="12" text-anchor="start" font-weight="normal" fill="#ccccdc" textLength="59.18" lengthAdjust="spacingAndGlyphs">Min: 34.0%</text>
<text x="934.94" y="283.70" font-size="12" text-anchor="start" font-weight="normal" fill="#ccccdc" textLength="59.56" lengthAdjust="spacingAndGlyphs">Avg: 41.3%</text>
<rect x="612.60" y="297.00" width="14" height="4" rx="1" fill="#6ED0E0"/>
<text x="634.80" y="301.70" font-size="12" text-anchor="start" font-weight="normal" fill="#ccccdc" textLength="33.38" lengthAdjust="spacingAndGlyphs">Iowait</text>
<text x="674.28" y="301.70" font-size="12" text-anchor="start" font-weight="normal" fill="#ccccdc" textLength="66.22" lengthAdjust="spacingAndGlyphs">Min: 0.472%</text>
<text x="746.60" y="301.70" font-size="12" text-anchor="start" font-weight="normal" fill="#ccccdc" textLength="59.67" lengthAdjust="spacingAndGlyphs">Avg: 2.36%</text>
<rect x="816.07" y="297.00" width="14" height="4" rx="1" fill="#EF843C"/>
<text x="838.27" y="301.70" font-size="12" text-anchor="start" font-weight="normal" fill="#ccccdc" textLength="19.47" lengthAdjust="spacingAndGlyphs">idle</text>
<text x="863.84" y="301.70" font-size="12" text-anchor="start" font-weight="normal" fill="#ccccdc" textLength="59.29" lengthAdjust="spacingAndGlyphs">Min: 21.7%</text>
<text x="929.23" y="301.70" font-size="12" text-anchor="start" font-weight="normal" fill="#ccccdc" textLength="59.67" lengthAdjust="spacingAndGlyphs">Avg: 28.9%</text>
</svg></div>
<div class="panel" style="left:1183.33px;top:96px;width:581.67px;height:220px">
<svg class="ptitle" width="581.67" height="30" viewBox="1183.33 96 581.67 30" style="left:-1px;top:-1px"><text x="1474.37" y="118.20" font-size="14" text-anchor="middle" font-weight="normal" fill="#ccccdc" stroke="#ccccdc" stroke-width="0.5" textLength="125.20" lengthAdjust="spacingAndGlyphs">Network Bandwidth</text></svg>
<svg class="pbody" width="581.67" height="190" viewBox="1183.33 126 581.67 190" style="left:-1px;top:29px">
<rect x="1243.00" y="146" width="497.00" height="1" fill="#424449"/>
<rect x="1243.00" y="165" width="497.00" height="1" fill="#424449"/>
<rect x="1243.00" y="184" width="497.00" height="1" fill="#424449"/>
<rect x="1243.00" y="203" width="497.00" height="1" fill="#424449"/>
<rect x="1243.00" y="222" width="497.00" height="1" fill="#424449"/>
<rect x="1243.00" y="242" width="497.00" height="1" fill="#424449"/>
<rect x="1274" y="146" width="1" height="97" fill="#424449"/>
<rect x="1370" y="146" width="1" height="97" fill="#424449"/>
<rect x="1467" y="146" width="1" height="97" fill="#424449"/>
<rect x="1563" y="146" width="1" height="97" fill="#424449"/>
<rect x="1660" y="146" width="1" height="97" fill="#424449"/>
<path d="M1243.00 212.77 L1250.44 214.59 L1258.48 224.75 L1266.53 224.45 L1274.57 221.72 L1282.61 227.78 L1290.65 210.20 L1298.69 216.56 L1306.74 225.66 L1314.78 226.27 L1322.82 225.51 L1330.86 224.90 L1338.90 213.84 L1346.95 218.08 L1354.99 224.75 L1363.03 228.69 L1371.07 227.18 L1379.11 226.27 L1387.16 220.66 L1395.20 218.08 L1403.24 223.69 L1411.28 226.87 L1419.32 224.45 L1427.37 227.78 L1435.41 221.72 L1443.45 215.65 L1451.49 220.96 L1459.53 228.54 L1467.58 227.78 L1475.62 224.45 L1483.66 225.96 L1491.70 219.45 L1499.74 219.45 L1507.79 227.78 L1515.83 235.36 L1523.87 225.51 L1531.91 226.42 L1539.95 214.44 L1548.00 216.11 L1556.04 222.17 L1564.08 227.48 L1572.12 224.90 L1580.16 228.54 L1588.21 214.90 L1596.25 218.08 L1604.29 231.27 L1612.33 228.24 L1620.37 232.48 L1628.42 236.12 L1636.46 214.44 L1644.50 223.24 L1652.54 232.79 L1660.58 224.75 L1668.63 233.09 L1676.67 229.00 L1684.71 217.17 L1692.75 224.45 L1700.79 227.03 L1708.84 228.54 L1716.88 236.58 L1724.92 229.00 L1732.96 221.42 L1732.96 242.20 L1243.00 242.20 Z" fill="#7EB26D" fill-opacity="0.1"/>
<path d="M1243.00 161.53 L1250.44 167.14 L1258.48 190.64 L1266.53 190.34 L1274.57 186.24 L1282.61 195.64 L1290.65 159.26 L1298.69 169.87 L1306.74 191.40 L1314.78 193.07 L1322.82 191.85 L1330.86 191.09 L1338.90 165.32 L1346.95 172.14 L1354.99 188.82 L1363.03 197.16 L1371.07 194.58 L1379.11 192.91 L1387.16 178.21 L1395.20 172.90 L1403.24 184.27 L1411.28 194.13 L1419.32 189.58 L1427.37 195.64 L1435.41 182.00 L1443.45 167.14 L1451.49 178.21 L1459.53 196.40 L1467.58 195.64 L1475.62 189.58 L1483.66 191.85 L1491.70 171.84 L1499.74 175.93 L1507.79 196.40 L1515.83 207.77 L1523.87 192.16 L1531.91 193.67 L1539.95 164.11 L1548.00 170.63 L1556.04 187.00 L1564.08 194.88 L1572.12 190.79 L1580.16 196.70 L1588.21 165.02 L1596.25 172.90 L1604.29 200.65 L1612.33 195.95 L1620.37 202.47 L1628.42 208.53 L1636.46 165.62 L1644.50 181.54 L1652.54 202.77 L1660.58 190.34 L1668.63 203.53 L1676.67 196.70 L1684.71 170.17 L1692.75 182.76 L1700.79 191.85 L1708.84 195.95 L1716.88 208.83 L1724.92 196.70 L1732.96 179.42 L1732.96 221.42 L1724.92 229.00 L1716.88 236.58 L1708.84 228.54 L1700.79 227.03 L1692.75 224.45 L1684.71 217.17 L1676.67 229.00 L1668.63 233.09 L1660.58 224.75 L1652.54 232.79 L1644.50 223.24 L1636.46 214.44 L1628.42 236.12 L1620.37 232.48 L1612.33 228.24 L1604.29 231.27 L1596.25 218.08 L1588.21 214.90 L1580.16 228.54 L1572.12 224.90 L1564.08 227.48 L1556.04 222.17 L1548.00 216.11 L1539.95 214.44 L1531.91 226.42 L1523.87 225.51 L1515.83 235.36 L1507.79 227.78 L1499.74 219.45 L1491.70 219.45 L1483.66 225.96 L1475.62 224.45 L1467.58 227.78 L1459.53 228.54 L1451.49 220.96 L1443.45 215.65 L1435.41 221.72 L1427.37 227.78 L1419.32 224.45 L1411.28 226.87 L1403.24 223.69 L1395.20 218.08 L1387.16 220.66 L1379.11 226.27 L1371.07 227.18 L1363.03 228.69 L1354.99 224.75 L1346.95 218.08 L1338.90 213.84 L1330.86 224.90 L1322.82 225.51 L1314.78 226.27 L1306.74 225.66 L1298.69 216.56 L1290.65 210.20 L1282.61 227.78 L1274.57 221.72 L1266.53 224.45 L1258.48 224.75 L1250.44 214.59 L1243.00 212.77 Z" fill="#EAB839" fill-opacity="0.1"/>
<path d="M1243.00 212.77 L1250.44 214.59 L1258.48 224.75 L1266.53 224.45 L1274.57 221.72 L1282.61 227.78 L1290.65 210.20 L1298.69 216.56 L1306.74 225.66 L1314.78 226.27 L1322.82 225.51 L1330.86 224.90 L1338.90 213.84 L1346.95 218.08 L1354.99 224.75 L1363.03 228.69 L1371.07 227.18 L1379.11 226.27 L1387.16 220.66 L1395.20 218.08 L1403.24 223.69 L1411.28 226.87 L1419.32 224.45 L1427.37 227.78 L1435.41 221.72 L1443.45 215.65 L1451.49 220.96 L1459.53 228.54 L1467.58 227.78 L1475.62 224.45 L1483.66 225.96 L1491.70 219.45 L1499.74 219.45 L1507.79 227.78 L1515.83 235.36 L1523.87 225.51 L1531.91 226.42 L1539.95 214.44 L1548.00 216.11 L1556.04 222.17 L1564.08 227.48 L1572.12 224.90 L1580.16 228.54 L1588.21 214.90 L1596.25 218.08 L1604.29 231.27 L1612.33 228.24 L1620.37 232.48 L1628.42 236.12 L1636.46 214.44 L1644.50 223.24 L1652.54 232.79 L1660.58 224.75 L1668.63 233.09 L1676.67 229.00 L1684.71 217.17 L1692.75 224.45 L1700.79 227.03 L1708.84 228.54 L1716.88 236.58 L1724.92 229.00 L1732.96 221.42" fill="none" stroke="#7EB26D" stroke-width="1.1" stroke-linejoin="round"/>
<path d="M1243.00 161.53 L1250.44 167.14 L1258.48 190.64 L1266.53 190.34 L1274.57 186.24 L1282.61 195.64 L1290.65 159.26 L1298.69 169.87 L1306.74 191.40 L1314.78 193.07 L1322.82 191.85 L1330.86 191.09 L1338.90 165.32 L1346.95 172.14 L1354.99 188.82 L1363.03 197.16 L1371.07 194.58 L1379.11 192.91 L1387.16 178.21 L1395.20 172.90 L1403.24 184.27 L1411.28 194.13 L1419.32 189.58 L1427.37 195.64 L1435.41 182.00 L1443.45 167.14 L1451.49 178.21 L1459.53 196.40 L1467.58 195.64 L1475.62 189.58 L1483.66 191.85 L1491.70 171.84 L1499.74 175.93 L1507.79 196.40 L1515.83 207.77 L1523.87 192.16 L1531.91 193.67 L1539.95 164.11 L1548.00 170.63 L1556.04 187.00 L1564.08 194.88 L1572.12 190.79 L1580.16 196.70 L1588.21 165.02 L1596.25 172.90 L1604.29 200.65 L1612.33 195.95 L1620.37 202.47 L1628.42 208.53 L1636.46 165.62 L1644.50 181.54 L1652.54 202.77 L1660.58 190.34 L1668.63 203.53 L1676.67 196.70 L1684.71 170.17 L1692.75 182.76 L1700.79 191.85 L1708.84 195.95 L1716.88 208.83 L1724.92 196.70 L1732.96 179.42" fill="none" stroke="#EAB839" stroke-width="1.1" stroke-linejoin="round"/>
<text x="1237.40" y="148.90" font-size="12" text-anchor="end" font-weight="normal" fill="#ccccdc" textLength="44.79" lengthAdjust="spacingAndGlyphs">70 Mb/s</text>
<text x="1237.40" y="168.10" font-size="12" text-anchor="end" font-weight="normal" fill="#ccccdc" textLength="44.79" lengthAdjust="spacingAndGlyphs">60 Mb/s</text>
<text x="1237.40" y="187.30" font-size="12" text-anchor="end" font-weight="normal" fill="#ccccdc" textLength="44.79" lengthAdjust="spacingAndGlyphs">50 Mb/s</text>
<text x="1237.40" y="206.50" font-size="12" text-anchor="end" font-weight="normal" fill="#ccccdc" textLength="44.79" lengthAdjust="spacingAndGlyphs">40 Mb/s</text>
<text x="1237.40" y="225.70" font-size="12" text-anchor="end" font-weight="normal" fill="#ccccdc" textLength="44.79" lengthAdjust="spacingAndGlyphs">30 Mb/s</text>
<text x="1237.40" y="244.90" font-size="12" text-anchor="end" font-weight="normal" fill="#ccccdc" textLength="44.79" lengthAdjust="spacingAndGlyphs">20 Mb/s</text>
<text x="1274.30" y="260.20" font-size="12" text-anchor="middle" font-weight="normal" fill="#ccccdc" textLength="29.86" lengthAdjust="spacingAndGlyphs">15:14</text>
<text x="1370.30" y="260.20" font-size="12" text-anchor="middle" font-weight="normal" fill="#ccccdc" textLength="29.86" lengthAdjust="spacingAndGlyphs">15:16</text>
<text x="1467.30" y="260.20" font-size="12" text-anchor="middle" font-weight="normal" fill="#ccccdc" textLength="29.86" lengthAdjust="spacingAndGlyphs">15:18</text>
<text x="1563.30" y="260.20" font-size="12" text-anchor="middle" font-weight="normal" fill="#ccccdc" textLength="29.86" lengthAdjust="spacingAndGlyphs">15:20</text>
<text x="1660.30" y="260.20" font-size="12" text-anchor="middle" font-weight="normal" fill="#ccccdc" textLength="29.86" lengthAdjust="spacingAndGlyphs">15:22</text>
<rect x="1202.00" y="279.00" width="14" height="4" rx="1" fill="#7EB26D"/>
<text x="1224.20" y="283.70" font-size="12" text-anchor="start" font-weight="normal" fill="#ccccdc" textLength="45.83" lengthAdjust="spacingAndGlyphs">recieved</text>
<text x="1276.13" y="283.70" font-size="12" text-anchor="start" font-weight="normal" fill="#ccccdc" textLength="82.23" lengthAdjust="spacingAndGlyphs">Min: 22.9 Mb/s</text>
<text x="1364.46" y="283.70" font-size="12" text-anchor="start" font-weight="normal" fill="#ccccdc" textLength="85.23" lengthAdjust="spacingAndGlyphs">Max: 36.5 Mb/s</text>
<text x="1455.80" y="283.70" font-size="12" text-anchor="start" font-weight="normal" fill="#ccccdc" textLength="82.60" lengthAdjust="spacingAndGlyphs">Avg: 29.3 Mb/s</text>
<rect x="1202.00" y="297.00" width="14" height="4" rx="1" fill="#EAB839"/>
<text x="1224.20" y="301.70" font-size="12" text-anchor="start" font-weight="normal" fill="#ccccdc" textLength="23.56" lengthAdjust="spacingAndGlyphs">sent</text>
<text x="1253.86" y="301.70" font-size="12" text-anchor="start" font-weight="normal" fill="#ccccdc" textLength="82.22" lengthAdjust="spacingAndGlyphs">Min: 14.4 Mb/s</text>
<text x="1342.18" y="301.70" font-size="12" text-anchor="start" font-weight="normal" fill="#ccccdc" textLength="85.22" lengthAdjust="spacingAndGlyphs">Max: 26.7 Mb/s</text>
<text x="1433.51" y="301.70" font-size="12" text-anchor="start" font-weight="normal" fill="#ccccdc" textLength="82.59" lengthAdjust="spacingAndGlyphs">Avg: 19.5 Mb/s</text>
</svg></div>
<div class="panel" style="left:593.67px;top:324px;width:581.67px;height:220px">
<svg class="ptitle" width="581.67" height="30" viewBox="593.67 324 581.67 30" style="left:-1px;top:-1px"><text x="884.70" y="346.20" font-size="14" text-anchor="middle" font-weight="normal" fill="#ccccdc" stroke="#ccccdc" stroke-width="0.5" textLength="121.00" lengthAdjust="spacingAndGlyphs">Memory Utilization</text></svg>
<svg class="pbody" width="581.67" height="190" viewBox="593.67 354 581.67 190" style="left:-1px;top:29px">
<rect x="648.00" y="374" width="503.00" height="1" fill="#424449"/>
<rect x="648.00" y="400" width="503.00" height="1" fill="#424449"/>
<rect x="648.00" y="426" width="503.00" height="1" fill="#424449"/>
<rect x="648.00" y="453" width="503.00" height="1" fill="#424449"/>
<rect x="679" y="374" width="1" height="80" fill="#424449"/>
<rect x="777" y="374" width="1" height="80" fill="#424449"/>
<rect x="875" y="374" width="1" height="80" fill="#424449"/>
<rect x="972" y="374" width="1" height="80" fill="#424449"/>
<rect x="1070" y="374" width="1" height="80" fill="#424449"/>
<path d="M648.00 439.60 L1143.90 438.60 L1143.90 453.00 L648.00 453.00 Z" fill="#7EB26D" fill-opacity="0.1"/>
<path d="M648.00 400.70 L1143.90 396.10 L1143.90 438.60 L648.00 439.60 Z" fill="#EAB839" fill-opacity="0.1"/>
<path d="M648.00 385.30 L1143.90 385.30 L1143.90 395.70 L648.00 400.30 Z" fill="#EF843C" fill-opacity="0.1"/>
<path d="M648.00 439.60 L1143.90 438.60" fill="none" stroke="#6f9f61" stroke-width="1.8"/>
<path d="M648.00 400.70 L1143.90 396.10" fill="none" stroke="#c9a23a" stroke-width="1.2"/>
<path d="M648.00 400.30 L1143.90 395.70" fill="none" stroke="#7cc3c7" stroke-width="1.3"/>
<path d="M648.00 385.30 L1143.90 385.30" fill="none" stroke="#dd7c3a" stroke-width="1.4"/>
<text x="642.20" y="376.90" font-size="12" text-anchor="end" font-weight="normal" fill="#ccccdc" textLength="38.83" lengthAdjust="spacingAndGlyphs">150 GB</text>
<text x="642.20" y="403.23" font-size="12" text-anchor="end" font-weight="normal" fill="#ccccdc" textLength="38.83" lengthAdjust="spacingAndGlyphs">100 GB</text>
<text x="642.20" y="429.57" font-size="12" text-anchor="end" font-weight="normal" fill="#ccccdc" textLength="32.09" lengthAdjust="spacingAndGlyphs">50 GB</text>
<text x="642.20" y="455.90" font-size="12" text-anchor="end" font-weight="normal" fill="#ccccdc" textLength="27.66" lengthAdjust="spacingAndGlyphs">0 MB</text>
<text x="679.30" y="470.00" font-size="12" text-anchor="middle" font-weight="normal" fill="#ccccdc" textLength="29.86" lengthAdjust="spacingAndGlyphs">15:14</text>
<text x="777.30" y="470.00" font-size="12" text-anchor="middle" font-weight="normal" fill="#ccccdc" textLength="29.86" lengthAdjust="spacingAndGlyphs">15:16</text>
<text x="875.30" y="470.00" font-size="12" text-anchor="middle" font-weight="normal" fill="#ccccdc" textLength="29.86" lengthAdjust="spacingAndGlyphs">15:18</text>
<text x="972.30" y="470.00" font-size="12" text-anchor="middle" font-weight="normal" fill="#ccccdc" textLength="29.86" lengthAdjust="spacingAndGlyphs">15:20</text>
<text x="1070.30" y="470.00" font-size="12" text-anchor="middle" font-weight="normal" fill="#ccccdc" textLength="29.86" lengthAdjust="spacingAndGlyphs">15:22</text>
<rect x="612.60" y="490.00" width="14" height="4" rx="1" fill="#7EB26D"/>
<text x="634.80" y="494.70" font-size="12" text-anchor="start" font-weight="normal" fill="#ccccdc" textLength="27.67" lengthAdjust="spacingAndGlyphs">Used</text>
<text x="668.57" y="494.70" font-size="12" text-anchor="start" font-weight="normal" fill="#ccccdc" textLength="69.32" lengthAdjust="spacingAndGlyphs">Min: 25.6 GB</text>
<text x="743.99" y="494.70" font-size="12" text-anchor="start" font-weight="normal" fill="#ccccdc" textLength="72.32" lengthAdjust="spacingAndGlyphs">Max: 27.2 GB</text>
<text x="822.41" y="494.70" font-size="12" text-anchor="start" font-weight="normal" fill="#ccccdc" textLength="69.69" lengthAdjust="spacingAndGlyphs">Avg: 26.5 GB</text>
<rect x="612.60" y="508.00" width="14" height="4" rx="1" fill="#EAB839"/>
<text x="634.80" y="512.70" font-size="12" text-anchor="start" font-weight="normal" fill="#ccccdc" textLength="41.27" lengthAdjust="spacingAndGlyphs">Cached</text>
<text x="682.17" y="512.70" font-size="12" text-anchor="start" font-weight="normal" fill="#ccccdc" textLength="69.42" lengthAdjust="spacingAndGlyphs">Min: 73.9 GB</text>
<text x="757.69" y="512.70" font-size="12" text-anchor="start" font-weight="normal" fill="#ccccdc" textLength="72.42" lengthAdjust="spacingAndGlyphs">Max: 81.1 GB</text>
<text x="836.21" y="512.70" font-size="12" text-anchor="start" font-weight="normal" fill="#ccccdc" textLength="69.79" lengthAdjust="spacingAndGlyphs">Avg: 77.6 GB</text>
<rect x="612.60" y="526.00" width="14" height="4" rx="1" fill="#6ED0E0"/>
<text x="634.80" y="530.70" font-size="12" text-anchor="start" font-weight="normal" fill="#ccccdc" textLength="39.81" lengthAdjust="spacingAndGlyphs">Buffers</text>
<text x="680.71" y="530.70" font-size="12" text-anchor="start" font-weight="normal" fill="#ccccdc" textLength="68.37" lengthAdjust="spacingAndGlyphs">Min: 332 MB</text>
<text x="755.18" y="530.70" font-size="12" text-anchor="start" font-weight="normal" fill="#ccccdc" textLength="71.37" lengthAdjust="spacingAndGlyphs">Max: 337 MB</text>
<text x="832.66" y="530.70" font-size="12" text-anchor="start" font-weight="normal" fill="#ccccdc" textLength="68.74" lengthAdjust="spacingAndGlyphs">Avg: 334 MB</text>
</svg></div>
<div class="panel" style="left:1183.33px;top:324px;width:581.67px;height:220px">
<svg class="ptitle" width="581.67" height="30" viewBox="1183.33 324 581.67 30" style="left:-1px;top:-1px"><text x="1474.37" y="346.20" font-size="14" text-anchor="middle" font-weight="normal" fill="#ccccdc" stroke="#ccccdc" stroke-width="0.5" textLength="53.00" lengthAdjust="spacingAndGlyphs">Disk BW</text></svg>
<svg class="pbody" width="581.67" height="190" viewBox="1183.33 354 581.67 190" style="left:-1px;top:29px">
<rect x="1250.00" y="374" width="490.00" height="1" fill="#424449"/>
<rect x="1250.00" y="397" width="490.00" height="1" fill="#424449"/>
<rect x="1250.00" y="419" width="490.00" height="1" fill="#424449"/>
<rect x="1250.00" y="442" width="490.00" height="1" fill="#424449"/>
<rect x="1250.00" y="465" width="490.00" height="1" fill="#424449"/>
<rect x="1250.00" y="488" width="490.00" height="1" fill="#424449"/>
<rect x="1280" y="374" width="1" height="115" fill="#424449"/>
<rect x="1376" y="374" width="1" height="115" fill="#424449"/>
<rect x="1471" y="374" width="1" height="115" fill="#424449"/>
<rect x="1566" y="374" width="1" height="115" fill="#424449"/>
<rect x="1661" y="374" width="1" height="115" fill="#424449"/>
<path d="M1250.00 386.53 L1256.64 402.45 L1264.58 392.90 L1272.52 392.29 L1280.46 391.08 L1288.40 398.66 L1296.34 391.53 L1304.28 391.53 L1312.22 390.02 L1320.16 389.11 L1328.10 386.23 L1336.04 381.53 L1343.98 387.29 L1351.92 382.29 L1359.86 390.02 L1367.80 379.71 L1375.74 384.56 L1383.68 385.47 L1391.62 390.32 L1399.56 385.02 L1407.50 395.32 L1415.44 382.13 L1423.38 391.08 L1431.32 387.59 L1439.26 383.95 L1447.20 395.32 L1455.14 382.29 L1463.08 391.23 L1471.02 380.92 L1478.96 386.53 L1486.90 383.04 L1494.84 389.26 L1502.78 386.53 L1510.72 393.35 L1518.66 378.19 L1526.60 388.35 L1534.54 389.71 L1542.48 376.07 L1550.42 397.45 L1558.36 393.66 L1566.30 383.95 L1574.24 388.35 L1582.18 395.63 L1590.12 377.89 L1598.06 397.14 L1606.00 391.84 L1613.94 387.29 L1621.88 392.14 L1629.82 397.90 L1637.76 387.74 L1645.70 393.35 L1653.64 386.99 L1661.58 390.78 L1669.52 384.26 L1677.46 391.08 L1685.40 383.50 L1693.34 391.84 L1701.28 388.35 L1709.22 383.50 L1717.16 389.87 L1725.10 393.05 L1733.04 376.68 L1733.04 488.10 L1250.00 488.10 Z" fill="#EAB839" fill-opacity="0.1"/>
<path d="M1250.00 386.53 L1256.64 402.45 L1264.58 392.90 L1272.52 392.29 L1280.46 391.08 L1288.40 398.66 L1296.34 391.53 L1304.28 391.53 L1312.22 390.02 L1320.16 389.11 L1328.10 386.23 L1336.04 381.53 L1343.98 387.29 L1351.92 382.29 L1359.86 390.02 L1367.80 379.71 L1375.74 384.56 L1383.68 385.47 L1391.62 390.32 L1399.56 385.02 L1407.50 395.32 L1415.44 382.13 L1423.38 391.08 L1431.32 387.59 L1439.26 383.95 L1447.20 395.32 L1455.14 382.29 L1463.08 391.23 L1471.02 380.92 L1478.96 386.53 L1486.90 383.04 L1494.84 389.26 L1502.78 386.53 L1510.72 393.35 L1518.66 378.19 L1526.60 388.35 L1534.54 389.71 L1542.48 376.07 L1550.42 397.45 L1558.36 393.66 L1566.30 383.95 L1574.24 388.35 L1582.18 395.63 L1590.12 377.89 L1598.06 397.14 L1606.00 391.84 L1613.94 387.29 L1621.88 392.14 L1629.82 397.90 L1637.76 387.74 L1645.70 393.35 L1653.64 386.99 L1661.58 390.78 L1669.52 384.26 L1677.46 391.08 L1685.40 383.50 L1693.34 391.84 L1701.28 388.35 L1709.22 383.50 L1717.16 389.87 L1725.10 393.05 L1733.04 376.68" fill="none" stroke="#EAB839" stroke-width="1.1" stroke-linejoin="round"/>
<rect x="1250" y="487" width="483.00" height="2" fill="#6d9b60"/>
<text x="1244.20" y="376.90" font-size="12" text-anchor="end" font-weight="normal" fill="#ccccdc" textLength="52.27" lengthAdjust="spacingAndGlyphs">250 MB/s</text>
<text x="1244.20" y="399.70" font-size="12" text-anchor="end" font-weight="normal" fill="#ccccdc" textLength="52.27" lengthAdjust="spacingAndGlyphs">200 MB/s</text>
<text x="1244.20" y="422.50" font-size="12" text-anchor="end" font-weight="normal" fill="#ccccdc" textLength="52.27" lengthAdjust="spacingAndGlyphs">150 MB/s</text>
<text x="1244.20" y="445.30" font-size="12" text-anchor="end" font-weight="normal" fill="#ccccdc" textLength="52.27" lengthAdjust="spacingAndGlyphs">100 MB/s</text>
<text x="1244.20" y="468.10" font-size="12" text-anchor="end" font-weight="normal" fill="#ccccdc" textLength="45.53" lengthAdjust="spacingAndGlyphs">50 MB/s</text>
<text x="1244.20" y="490.90" font-size="12" text-anchor="end" font-weight="normal" fill="#ccccdc" textLength="34.39" lengthAdjust="spacingAndGlyphs">0 kB/s</text>
<text x="1280.30" y="506.20" font-size="12" text-anchor="middle" font-weight="normal" fill="#ccccdc" textLength="29.86" lengthAdjust="spacingAndGlyphs">15:14</text>
<text x="1376.30" y="506.20" font-size="12" text-anchor="middle" font-weight="normal" fill="#ccccdc" textLength="29.86" lengthAdjust="spacingAndGlyphs">15:16</text>
<text x="1471.30" y="506.20" font-size="12" text-anchor="middle" font-weight="normal" fill="#ccccdc" textLength="29.86" lengthAdjust="spacingAndGlyphs">15:18</text>
<text x="1566.30" y="506.20" font-size="12" text-anchor="middle" font-weight="normal" fill="#ccccdc" textLength="29.86" lengthAdjust="spacingAndGlyphs">15:20</text>
<text x="1661.30" y="506.20" font-size="12" text-anchor="middle" font-weight="normal" fill="#ccccdc" textLength="29.86" lengthAdjust="spacingAndGlyphs">15:22</text>
<rect x="1202.00" y="525.00" width="14" height="4" rx="1" fill="#7EB26D"/>
<text x="1224.20" y="529.70" font-size="12" text-anchor="start" font-weight="normal" fill="#ccccdc" textLength="27.58" lengthAdjust="spacingAndGlyphs">Read</text>
<text x="1257.88" y="529.70" font-size="12" text-anchor="start" font-weight="normal" fill="#ccccdc" textLength="78.23" lengthAdjust="spacingAndGlyphs">Max: 423 kB/s</text>
<text x="1342.22" y="529.70" font-size="12" text-anchor="start" font-weight="normal" fill="#ccccdc" textLength="78.83" lengthAdjust="spacingAndGlyphs">Avg: 55.0 kB/s</text>
<rect x="1430.84" y="525.00" width="14" height="4" rx="1" fill="#EAB839"/>
<text x="1453.04" y="529.70" font-size="12" text-anchor="start" font-weight="normal" fill="#ccccdc" textLength="28.45" lengthAdjust="spacingAndGlyphs">Write</text>
<text x="1487.60" y="529.70" font-size="12" text-anchor="start" font-weight="normal" fill="#ccccdc" textLength="82.72" lengthAdjust="spacingAndGlyphs">Max: 245 MB/s</text>
<text x="1576.41" y="529.70" font-size="12" text-anchor="start" font-weight="normal" fill="#ccccdc" textLength="80.09" lengthAdjust="spacingAndGlyphs">Avg: 218 MB/s</text>
</svg></div>
<div class="panel" style="left:593.67px;top:552px;width:581.67px;height:410px">
<svg class="ptitle" width="581.67" height="30" viewBox="593.67 552 581.67 30" style="left:-1px;top:-1px"><text x="884.70" y="574.20" font-size="14" text-anchor="middle" font-weight="normal" fill="#ccccdc" stroke="#ccccdc" stroke-width="0.5" textLength="130.90" lengthAdjust="spacingAndGlyphs">Per Disk Throughput</text></svg>
<svg class="pbody" width="581.67" height="380" viewBox="593.67 582 581.67 380" style="left:-1px;top:29px">
<rect x="660.00" y="602" width="491.30" height="1" fill="#424449"/>
<rect x="660.00" y="632" width="491.30" height="1" fill="#424449"/>
<rect x="660.00" y="663" width="491.30" height="1" fill="#424449"/>
<rect x="660.00" y="693" width="491.30" height="1" fill="#424449"/>
<rect x="660.00" y="724" width="491.30" height="1" fill="#424449"/>
<rect x="660.00" y="754" width="491.30" height="1" fill="#424449"/>
<rect x="660.00" y="785" width="491.30" height="1" fill="#424449"/>
<rect x="660.00" y="816" width="491.30" height="1" fill="#424449"/>
<rect x="690" y="602" width="1" height="215" fill="#424449"/>
<rect x="786" y="602" width="1" height="215" fill="#424449"/>
<rect x="881" y="602" width="1" height="215" fill="#424449"/>
<rect x="976" y="602" width="1" height="215" fill="#424449"/>
<rect x="1072" y="602" width="1" height="215" fill="#424449"/>
<path d="M660.00 786.81 L666.56 716.75 L674.51 718.85 L682.47 791.89 L690.42 713.53 L698.38 720.80 L706.34 790.83 L714.29 713.64 L722.25 722.96 L730.20 783.31 L738.16 717.58 L746.12 722.81 L754.07 785.29 L762.03 711.26 L769.98 722.97 L777.94 789.60 L785.90 713.00 L793.85 716.83 L801.81 786.44 L809.76 715.01 L817.72 716.47 L825.68 792.89 L833.63 710.51 L841.59 721.21 L849.54 789.71 L857.50 717.06 L865.46 721.05 L873.41 781.36 L881.37 716.00 L889.32 719.53 L897.28 787.26 L905.24 713.41 L913.19 719.75 L921.15 794.01 L929.10 715.60 L937.06 722.04 L945.02 789.96 L952.97 711.69 L960.93 721.21 L968.88 787.55 L976.84 710.54 L984.80 721.19 L992.75 791.77 L1000.71 708.15 L1008.66 721.88 L1016.62 794.49 L1024.58 709.23 L1032.53 717.50 L1040.49 790.42 L1048.44 710.41 L1056.40 716.74 L1064.36 797.92 L1072.31 708.82 L1080.27 718.14 L1088.22 803.92 L1096.18 707.18 L1104.14 723.57 L1112.09 795.60 L1120.05 704.35 L1128.00 719.67 L1135.96 798.82 L1143.92 707.49 L1143.92 632.50 L660.00 632.50 Z" fill="#7EB26D" fill-opacity="0.1"/>
<path d="M660.00 783.24 L666.56 717.10 L674.51 718.94 L682.47 791.46 L690.42 713.76 L698.38 721.27 L706.34 788.90 L714.29 714.01 L722.25 723.29 L730.20 785.68 L738.16 717.15 L746.12 722.67 L754.07 783.32 L762.03 711.12 L769.98 722.93 L777.94 787.35 L785.90 712.52 L793.85 716.77 L801.81 786.12 L809.76 714.34 L817.72 716.18 L825.68 792.22 L833.63 749.19 L841.59 747.49 L849.54 789.10 L857.50 717.30 L865.46 721.68 L873.41 782.66 L881.37 715.63 L889.32 719.00 L897.28 790.42 L905.24 713.12 L913.19 719.25 L921.15 792.29 L929.10 715.70 L937.06 722.31 L945.02 790.02 L952.97 711.41 L960.93 721.04 L968.88 792.09 L976.84 710.61 L984.80 721.70 L992.75 792.75 L1000.71 707.87 L1008.66 721.62 L1016.62 790.87 L1024.58 708.70 L1032.53 717.30 L1040.49 795.92 L1048.44 710.37 L1056.40 716.48 L1064.36 801.43 L1072.31 708.77 L1080.27 718.32 L1088.22 804.06 L1096.18 707.04 L1104.14 723.57 L1112.09 799.82 L1120.05 704.14 L1128.00 719.50 L1135.96 792.71 L1143.92 707.82 L1143.92 632.50 L660.00 632.50 Z" fill="#EAB839" fill-opacity="0.1"/>
<path d="M660.00 718.79 L666.56 788.47 L674.51 710.91 L682.47 718.47 L690.42 786.74 L698.38 716.09 L706.34 716.18 L714.29 785.21 L722.25 711.36 L730.20 722.13 L738.16 787.59 L746.12 711.27 L754.07 721.53 L762.03 779.09 L769.98 714.03 L777.94 722.02 L785.90 784.09 L793.85 714.46 L801.81 718.63 L809.76 779.26 L817.72 717.11 L825.68 720.93 L833.63 789.65 L841.59 709.65 L849.54 722.78 L857.50 790.58 L865.46 717.10 L873.41 720.94 L881.37 781.73 L889.32 709.32 L897.28 718.19 L905.24 781.20 L913.19 708.55 L921.15 721.15 L929.10 790.22 L937.06 708.03 L945.02 717.98 L952.97 794.47 L960.93 709.60 L968.88 720.49 L976.84 794.14 L984.80 711.76 L992.75 722.42 L1000.71 801.82 L1008.66 711.54 L1016.62 721.24 L1024.58 787.27 L1032.53 712.49 L1040.49 716.23 L1048.44 800.87 L1056.40 709.55 L1064.36 717.29 L1072.31 790.70 L1080.27 708.54 L1088.22 723.20 L1096.18 800.75 L1104.14 708.34 L1112.09 716.76 L1120.05 801.96 L1128.00 707.72 L1135.96 717.18 L1143.92 807.71 L1143.92 632.50 L660.00 632.50 Z" fill="#6ED0E0" fill-opacity="0.1"/>
<path d="M660.00 715.48 L666.56 716.48 L674.51 779.09 L682.47 713.58 L690.42 722.14 L698.38 782.34 L706.34 715.60 L714.29 720.66 L722.25 788.08 L730.20 714.82 L738.16 720.34 L746.12 787.84 L754.07 716.09 L762.03 719.67 L769.98 792.52 L777.94 715.51 L785.90 722.90 L793.85 782.01 L801.81 717.57 L809.76 723.47 L817.72 787.95 L825.68 716.26 L833.63 719.63 L841.59 782.76 L849.54 711.69 L857.50 718.89 L865.46 786.85 L873.41 709.66 L881.37 720.92 L889.32 788.49 L897.28 708.41 L905.24 722.58 L913.19 784.77 L921.15 710.94 L929.10 722.98 L937.06 784.87 L945.02 707.64 L952.97 718.63 L960.93 786.45 L968.88 708.20 L976.84 722.88 L984.80 789.43 L992.75 710.15 L1000.71 717.65 L1008.66 793.26 L1016.62 706.37 L1024.58 719.38 L1032.53 790.86 L1040.49 707.22 L1048.44 718.63 L1056.40 797.28 L1064.36 711.71 L1072.31 722.90 L1080.27 799.25 L1088.22 710.50 L1096.18 717.67 L1104.14 795.64 L1112.09 757.65 L1120.05 750.03 L1128.00 799.35 L1135.96 705.90 L1143.92 723.93 L1143.92 632.50 L660.00 632.50 Z" fill="#EF843C" fill-opacity="0.1"/>
<path d="M660.00 715.62 L666.56 716.36 L674.51 779.78 L682.47 713.30 L690.42 722.12 L698.38 777.60 L706.34 715.76 L714.29 721.15 L722.25 787.29 L730.20 714.65 L738.16 719.77 L746.12 783.55 L754.07 716.39 L762.03 719.76 L769.98 790.24 L777.94 715.73 L785.90 723.25 L793.85 783.93 L801.81 717.56 L809.76 755.05 L817.72 748.04 L825.68 758.01 L833.63 719.47 L841.59 787.10 L849.54 711.54 L857.50 718.93 L865.46 784.67 L873.41 710.03 L881.37 721.02 L889.32 787.57 L897.28 708.10 L905.24 722.18 L913.19 787.06 L921.15 710.49 L929.10 722.93 L937.06 785.27 L945.02 708.16 L952.97 718.67 L960.93 789.86 L968.88 708.24 L976.84 722.56 L984.80 789.28 L992.75 709.72 L1000.71 717.47 L1008.66 791.67 L1016.62 706.75 L1024.58 719.02 L1032.53 787.15 L1040.49 707.49 L1048.44 718.52 L1056.40 797.17 L1064.36 712.32 L1072.31 722.74 L1080.27 800.93 L1088.22 711.14 L1096.18 717.28 L1104.14 794.28 L1112.09 705.33 L1120.05 718.85 L1128.00 795.29 L1135.96 706.27 L1143.92 723.65 L1143.92 632.50 L660.00 632.50 Z" fill="#E24D42" fill-opacity="0.1"/>
<path d="M660.00 718.66 L666.56 789.30 L674.51 711.61 L682.47 718.52 L690.42 787.79 L698.38 716.52 L706.34 716.30 L714.29 784.92 L722.25 711.24 L730.20 721.57 L738.16 785.50 L746.12 711.43 L754.07 721.57 L762.03 776.26 L769.98 713.66 L777.94 721.92 L785.90 790.46 L793.85 714.88 L801.81 718.91 L809.76 783.39 L817.72 716.51 L825.68 720.80 L833.63 788.41 L841.59 709.76 L849.54 722.24 L857.50 793.94 L865.46 717.06 L873.41 720.48 L881.37 784.35 L889.32 709.66 L897.28 718.36 L905.24 785.98 L913.19 708.78 L921.15 721.41 L929.10 791.28 L937.06 708.10 L945.02 718.47 L952.97 794.68 L960.93 709.10 L968.88 720.54 L976.84 791.43 L984.80 711.96 L992.75 722.65 L1000.71 799.98 L1008.66 711.48 L1016.62 721.21 L1024.58 790.56 L1032.53 712.00 L1040.49 716.34 L1048.44 799.42 L1056.40 709.76 L1064.36 717.32 L1072.31 793.79 L1080.27 708.28 L1088.22 723.06 L1096.18 796.21 L1104.14 708.23 L1112.09 717.11 L1120.05 802.13 L1128.00 707.59 L1135.96 717.09 L1143.92 804.29 L1143.92 632.50 L660.00 632.50 Z" fill="#1F78C1" fill-opacity="0.1"/>
<path d="M660.00 780.83 L666.56 716.44 L674.51 750.16 L682.47 753.42 L690.42 713.67 L698.38 720.01 L706.34 783.95 L714.29 714.46 L722.25 723.93 L730.20 781.35 L738.16 718.13 L746.12 722.72 L754.07 781.53 L762.03 711.22 L769.98 723.59 L777.94 782.03 L785.90 713.08 L793.85 716.75 L801.81 779.15 L809.76 713.71 L817.72 716.63 L825.68 784.81 L833.63 710.74 L841.59 721.40 L849.54 785.83 L857.50 718.13 L865.46 721.48 L873.41 780.76 L881.37 716.98 L889.32 718.60 L897.28 783.70 L905.24 713.54 L913.19 719.03 L921.15 789.82 L929.10 715.93 L937.06 722.04 L945.02 784.48 L952.97 711.00 L960.93 722.26 L968.88 786.53 L976.84 711.44 L984.80 721.94 L992.75 784.91 L1000.71 757.30 L1008.66 747.67 L1016.62 753.66 L1024.58 707.90 L1032.53 717.32 L1040.49 788.12 L1048.44 710.28 L1056.40 716.38 L1064.36 795.36 L1072.31 708.64 L1080.27 717.96 L1088.22 796.60 L1096.18 706.19 L1104.14 722.82 L1112.09 791.34 L1120.05 703.17 L1128.00 719.98 L1135.96 791.03 L1143.92 706.38 L1143.92 632.50 L660.00 632.50 Z" fill="#F4D598" fill-opacity="0.1"/>
<path d="M660.00 781.15 L666.56 751.89 L674.51 758.67 L682.47 750.70 L690.42 714.55 L698.38 721.55 L706.34 785.79 L714.29 713.34 L722.25 722.63 L730.20 779.87 L738.16 718.34 L746.12 722.40 L754.07 780.55 L762.03 711.89 L769.98 721.75 L777.94 781.89 L785.90 713.41 L793.85 715.54 L801.81 779.60 L809.76 714.73 L817.72 715.24 L825.68 785.02 L833.63 711.58 L841.59 721.64 L849.54 785.85 L857.50 717.35 L865.46 722.08 L873.41 780.43 L881.37 715.22 L889.32 720.51 L897.28 782.77 L905.24 713.62 L913.19 720.76 L921.15 790.37 L929.10 715.20 L937.06 722.06 L945.02 785.68 L952.97 710.51 L960.93 720.59 L968.88 785.52 L976.84 711.80 L984.80 750.72 L992.75 749.71 L1000.71 707.39 L1008.66 722.37 L1016.62 789.84 L1024.58 709.10 L1032.53 716.17 L1040.49 787.62 L1048.44 710.88 L1056.40 717.26 L1064.36 794.80 L1072.31 708.35 L1080.27 717.55 L1088.22 797.55 L1096.18 708.35 L1104.14 722.85 L1112.09 792.44 L1120.05 705.30 L1128.00 718.32 L1135.96 790.85 L1143.92 706.72 L1143.92 632.50 L660.00 632.50 Z" fill="#70DBED" fill-opacity="0.1"/>
<path d="M660.00 719.55 L666.56 783.31 L674.51 710.53 L682.47 717.03 L690.42 780.84 L698.38 717.25 L706.34 715.40 L714.29 780.95 L722.25 711.12 L730.20 723.00 L738.16 759.01 L746.12 753.51 L754.07 720.45 L762.03 775.16 L769.98 713.06 L777.94 723.06 L785.90 782.33 L793.85 715.21 L801.81 718.95 L809.76 774.89 L817.72 716.04 L825.68 721.49 L833.63 785.15 L841.59 710.00 L849.54 722.51 L857.50 787.49 L865.46 718.16 L873.41 721.33 L881.37 778.94 L889.32 708.56 L897.28 719.35 L905.24 779.38 L913.19 707.84 L921.15 722.31 L929.10 788.21 L937.06 708.72 L945.02 717.88 L952.97 791.59 L960.93 709.14 L968.88 721.29 L976.84 789.43 L984.80 711.45 L992.75 722.54 L1000.71 793.77 L1008.66 711.57 L1016.62 721.17 L1024.58 786.50 L1032.53 711.84 L1040.49 716.55 L1048.44 794.83 L1056.40 708.84 L1064.36 747.97 L1072.31 748.47 L1080.27 708.97 L1088.22 723.30 L1096.18 794.53 L1104.14 708.95 L1112.09 717.02 L1120.05 798.55 L1128.00 707.61 L1135.96 716.99 L1143.92 801.44 L1143.92 632.50 L660.00 632.50 Z" fill="#F9BA8F" fill-opacity="0.1"/>
<path d="M660.00 716.99 L666.56 716.03 L674.51 774.27 L682.47 713.48 L690.42 721.59 L698.38 776.54 L706.34 715.71 L714.29 719.94 L722.25 784.54 L730.20 713.96 L738.16 718.96 L746.12 780.74 L754.07 717.33 L762.03 720.74 L769.98 785.24 L777.94 715.39 L785.90 721.86 L793.85 780.66 L801.81 717.38 L809.76 722.79 L817.72 782.90 L825.68 715.98 L833.63 720.43 L841.59 780.84 L849.54 712.33 L857.50 717.75 L865.46 780.31 L873.41 710.49 L881.37 721.65 L889.32 786.40 L897.28 708.12 L905.24 722.02 L913.19 783.68 L921.15 711.77 L929.10 723.22 L937.06 782.44 L945.02 708.22 L952.97 719.67 L960.93 784.53 L968.88 709.17 L976.84 723.06 L984.80 788.13 L992.75 708.83 L1000.71 717.12 L1008.66 785.25 L1016.62 706.61 L1024.58 719.96 L1032.53 786.96 L1040.49 706.00 L1048.44 718.01 L1056.40 794.78 L1064.36 713.22 L1072.31 722.63 L1080.27 793.60 L1088.22 710.97 L1096.18 718.06 L1104.14 792.63 L1112.09 704.60 L1120.05 719.67 L1128.00 793.98 L1135.96 706.57 L1143.92 723.77 L1143.92 632.50 L660.00 632.50 Z" fill="#F29191" fill-opacity="0.1"/>
<path d="M660.00 783.00 L666.56 715.93 L674.51 719.88 L682.47 783.71 L690.42 713.62 L698.38 721.31 L706.34 784.62 L714.29 712.71 L722.25 723.89 L730.20 781.75 L738.16 717.43 L746.12 723.57 L754.07 781.89 L762.03 711.85 L769.98 723.79 L777.94 783.76 L785.90 713.19 L793.85 717.12 L801.81 778.72 L809.76 715.21 L817.72 716.44 L825.68 786.62 L833.63 711.12 L841.59 722.65 L849.54 786.50 L857.50 718.14 L865.46 720.77 L873.41 779.86 L881.37 716.53 L889.32 719.39 L897.28 781.83 L905.24 714.44 L913.19 718.80 L921.15 790.13 L929.10 715.51 L937.06 721.27 L945.02 784.88 L952.97 711.68 L960.93 720.83 L968.88 785.49 L976.84 711.21 L984.80 720.59 L992.75 785.07 L1000.71 707.74 L1008.66 722.04 L1016.62 789.31 L1024.58 710.00 L1032.53 718.08 L1040.49 789.45 L1048.44 709.70 L1056.40 717.00 L1064.36 796.65 L1072.31 709.54 L1080.27 717.21 L1088.22 795.64 L1096.18 706.85 L1104.14 723.84 L1112.09 792.89 L1120.05 704.76 L1128.00 719.49 L1135.96 792.02 L1143.92 707.59 L1143.92 632.50 L660.00 632.50 Z" fill="#82B5D8" fill-opacity="0.1"/>
<path d="M660.00 740.83 L666.56 741.21 L674.51 738.22 L682.47 737.91 L690.42 737.09 L698.38 737.54 L706.34 740.00 L714.29 738.45 L722.25 737.66 L730.20 738.48 L738.16 741.54 L746.12 742.96 L754.07 743.50 L762.03 746.08 L769.98 748.34 L777.94 744.86 L785.90 738.31 L793.85 732.54 L801.81 732.69 L809.76 735.80 L817.72 738.96 L825.68 740.92 L833.63 739.92 L841.59 739.47 L849.54 736.72 L857.50 735.50 L865.46 734.85 L873.41 733.77 L881.37 735.84 L889.32 736.01 L897.28 735.26 L905.24 735.09 L913.19 734.65 L921.15 737.27 L929.10 736.19 L937.06 734.43 L945.02 735.01 L952.97 735.62 L960.93 737.32 L968.88 738.81 L976.84 739.77 L984.80 741.71 L992.75 740.54 L1000.71 739.83 L1008.66 739.35 L1016.62 735.81 L1024.58 733.49 L1032.53 731.81 L1040.49 734.85 L1048.44 740.73 L1056.40 746.42 L1064.36 750.14 L1072.31 748.03 L1080.27 743.28 L1088.22 739.71 L1096.18 736.70 L1104.14 736.79 L1112.09 739.54 L1120.05 742.01 L1128.00 743.66 L1135.96 745.23 L1143.92 747.68 L1143.92 632.50 L660.00 632.50 Z" fill="#E5A8E2" fill-opacity="0.1"/>
<path d="M660.00 786.81 L666.56 716.75 L674.51 718.85 L682.47 791.89 L690.42 713.53 L698.38 720.80 L706.34 790.83 L714.29 713.64 L722.25 722.96 L730.20 783.31 L738.16 717.58 L746.12 722.81 L754.07 785.29 L762.03 711.26 L769.98 722.97 L777.94 789.60 L785.90 713.00 L793.85 716.83 L801.81 786.44 L809.76 715.01 L817.72 716.47 L825.68 792.89 L833.63 710.51 L841.59 721.21 L849.54 789.71 L857.50 717.06 L865.46 721.05 L873.41 781.36 L881.37 716.00 L889.32 719.53 L897.28 787.26 L905.24 713.41 L913.19 719.75 L921.15 794.01 L929.10 715.60 L937.06 722.04 L945.02 789.96 L952.97 711.69 L960.93 721.21 L968.88 787.55 L976.84 710.54 L984.80 721.19 L992.75 791.77 L1000.71 708.15 L1008.66 721.88 L1016.62 794.49 L1024.58 709.23 L1032.53 717.50 L1040.49 790.42 L1048.44 710.41 L1056.40 716.74 L1064.36 797.92 L1072.31 708.82 L1080.27 718.14 L1088.22 803.92 L1096.18 707.18 L1104.14 723.57 L1112.09 795.60 L1120.05 704.35 L1128.00 719.67 L1135.96 798.82 L1143.92 707.49" fill="none" stroke="#7EB26D" stroke-width="1.15" stroke-linejoin="round"/>
<path d="M660.00 783.24 L666.56 717.10 L674.51 718.94 L682.47 791.46 L690.42 713.76 L698.38 721.27 L706.34 788.90 L714.29 714.01 L722.25 723.29 L730.20 785.68 L738.16 717.15 L746.12 722.67 L754.07 783.32 L762.03 711.12 L769.98 722.93 L777.94 787.35 L785.90 712.52 L793.85 716.77 L801.81 786.12 L809.76 714.34 L817.72 716.18 L825.68 792.22 L833.63 749.19 L841.59 747.49 L849.54 789.10 L857.50 717.30 L865.46 721.68 L873.41 782.66 L881.37 715.63 L889.32 719.00 L897.28 790.42 L905.24 713.12 L913.19 719.25 L921.15 792.29 L929.10 715.70 L937.06 722.31 L945.02 790.02 L952.97 711.41 L960.93 721.04 L968.88 792.09 L976.84 710.61 L984.80 721.70 L992.75 792.75 L1000.71 707.87 L1008.66 721.62 L1016.62 790.87 L1024.58 708.70 L1032.53 717.30 L1040.49 795.92 L1048.44 710.37 L1056.40 716.48 L1064.36 801.43 L1072.31 708.77 L1080.27 718.32 L1088.22 804.06 L1096.18 707.04 L1104.14 723.57 L1112.09 799.82 L1120.05 704.14 L1128.00 719.50 L1135.96 792.71 L1143.92 707.82" fill="none" stroke="#EAB839" stroke-width="1.15" stroke-linejoin="round"/>
<path d="M660.00 718.79 L666.56 788.47 L674.51 710.91 L682.47 718.47 L690.42 786.74 L698.38 716.09 L706.34 716.18 L714.29 785.21 L722.25 711.36 L730.20 722.13 L738.16 787.59 L746.12 711.27 L754.07 721.53 L762.03 779.09 L769.98 714.03 L777.94 722.02 L785.90 784.09 L793.85 714.46 L801.81 718.63 L809.76 779.26 L817.72 717.11 L825.68 720.93 L833.63 789.65 L841.59 709.65 L849.54 722.78 L857.50 790.58 L865.46 717.10 L873.41 720.94 L881.37 781.73 L889.32 709.32 L897.28 718.19 L905.24 781.20 L913.19 708.55 L921.15 721.15 L929.10 790.22 L937.06 708.03 L945.02 717.98 L952.97 794.47 L960.93 709.60 L968.88 720.49 L976.84 794.14 L984.80 711.76 L992.75 722.42 L1000.71 801.82 L1008.66 711.54 L1016.62 721.24 L1024.58 787.27 L1032.53 712.49 L1040.49 716.23 L1048.44 800.87 L1056.40 709.55 L1064.36 717.29 L1072.31 790.70 L1080.27 708.54 L1088.22 723.20 L1096.18 800.75 L1104.14 708.34 L1112.09 716.76 L1120.05 801.96 L1128.00 707.72 L1135.96 717.18 L1143.92 807.71" fill="none" stroke="#6ED0E0" stroke-width="1.15" stroke-linejoin="round"/>
<path d="M660.00 715.48 L666.56 716.48 L674.51 779.09 L682.47 713.58 L690.42 722.14 L698.38 782.34 L706.34 715.60 L714.29 720.66 L722.25 788.08 L730.20 714.82 L738.16 720.34 L746.12 787.84 L754.07 716.09 L762.03 719.67 L769.98 792.52 L777.94 715.51 L785.90 722.90 L793.85 782.01 L801.81 717.57 L809.76 723.47 L817.72 787.95 L825.68 716.26 L833.63 719.63 L841.59 782.76 L849.54 711.69 L857.50 718.89 L865.46 786.85 L873.41 709.66 L881.37 720.92 L889.32 788.49 L897.28 708.41 L905.24 722.58 L913.19 784.77 L921.15 710.94 L929.10 722.98 L937.06 784.87 L945.02 707.64 L952.97 718.63 L960.93 786.45 L968.88 708.20 L976.84 722.88 L984.80 789.43 L992.75 710.15 L1000.71 717.65 L1008.66 793.26 L1016.62 706.37 L1024.58 719.38 L1032.53 790.86 L1040.49 707.22 L1048.44 718.63 L1056.40 797.28 L1064.36 711.71 L1072.31 722.90 L1080.27 799.25 L1088.22 710.50 L1096.18 717.67 L1104.14 795.64 L1112.09 757.65 L1120.05 750.03 L1128.00 799.35 L1135.96 705.90 L1143.92 723.93" fill="none" stroke="#EF843C" stroke-width="1.15" stroke-linejoin="round"/>
<path d="M660.00 715.62 L666.56 716.36 L674.51 779.78 L682.47 713.30 L690.42 722.12 L698.38 777.60 L706.34 715.76 L714.29 721.15 L722.25 787.29 L730.20 714.65 L738.16 719.77 L746.12 783.55 L754.07 716.39 L762.03 719.76 L769.98 790.24 L777.94 715.73 L785.90 723.25 L793.85 783.93 L801.81 717.56 L809.76 755.05 L817.72 748.04 L825.68 758.01 L833.63 719.47 L841.59 787.10 L849.54 711.54 L857.50 718.93 L865.46 784.67 L873.41 710.03 L881.37 721.02 L889.32 787.57 L897.28 708.10 L905.24 722.18 L913.19 787.06 L921.15 710.49 L929.10 722.93 L937.06 785.27 L945.02 708.16 L952.97 718.67 L960.93 789.86 L968.88 708.24 L976.84 722.56 L984.80 789.28 L992.75 709.72 L1000.71 717.47 L1008.66 791.67 L1016.62 706.75 L1024.58 719.02 L1032.53 787.15 L1040.49 707.49 L1048.44 718.52 L1056.40 797.17 L1064.36 712.32 L1072.31 722.74 L1080.27 800.93 L1088.22 711.14 L1096.18 717.28 L1104.14 794.28 L1112.09 705.33 L1120.05 718.85 L1128.00 795.29 L1135.96 706.27 L1143.92 723.65" fill="none" stroke="#E24D42" stroke-width="1.15" stroke-linejoin="round"/>
<path d="M660.00 718.66 L666.56 789.30 L674.51 711.61 L682.47 718.52 L690.42 787.79 L698.38 716.52 L706.34 716.30 L714.29 784.92 L722.25 711.24 L730.20 721.57 L738.16 785.50 L746.12 711.43 L754.07 721.57 L762.03 776.26 L769.98 713.66 L777.94 721.92 L785.90 790.46 L793.85 714.88 L801.81 718.91 L809.76 783.39 L817.72 716.51 L825.68 720.80 L833.63 788.41 L841.59 709.76 L849.54 722.24 L857.50 793.94 L865.46 717.06 L873.41 720.48 L881.37 784.35 L889.32 709.66 L897.28 718.36 L905.24 785.98 L913.19 708.78 L921.15 721.41 L929.10 791.28 L937.06 708.10 L945.02 718.47 L952.97 794.68 L960.93 709.10 L968.88 720.54 L976.84 791.43 L984.80 711.96 L992.75 722.65 L1000.71 799.98 L1008.66 711.48 L1016.62 721.21 L1024.58 790.56 L1032.53 712.00 L1040.49 716.34 L1048.44 799.42 L1056.40 709.76 L1064.36 717.32 L1072.31 793.79 L1080.27 708.28 L1088.22 723.06 L1096.18 796.21 L1104.14 708.23 L1112.09 717.11 L1120.05 802.13 L1128.00 707.59 L1135.96 717.09 L1143.92 804.29" fill="none" stroke="#1F78C1" stroke-width="1.15" stroke-linejoin="round"/>
<path d="M660.00 780.83 L666.56 716.44 L674.51 750.16 L682.47 753.42 L690.42 713.67 L698.38 720.01 L706.34 783.95 L714.29 714.46 L722.25 723.93 L730.20 781.35 L738.16 718.13 L746.12 722.72 L754.07 781.53 L762.03 711.22 L769.98 723.59 L777.94 782.03 L785.90 713.08 L793.85 716.75 L801.81 779.15 L809.76 713.71 L817.72 716.63 L825.68 784.81 L833.63 710.74 L841.59 721.40 L849.54 785.83 L857.50 718.13 L865.46 721.48 L873.41 780.76 L881.37 716.98 L889.32 718.60 L897.28 783.70 L905.24 713.54 L913.19 719.03 L921.15 789.82 L929.10 715.93 L937.06 722.04 L945.02 784.48 L952.97 711.00 L960.93 722.26 L968.88 786.53 L976.84 711.44 L984.80 721.94 L992.75 784.91 L1000.71 757.30 L1008.66 747.67 L1016.62 753.66 L1024.58 707.90 L1032.53 717.32 L1040.49 788.12 L1048.44 710.28 L1056.40 716.38 L1064.36 795.36 L1072.31 708.64 L1080.27 717.96 L1088.22 796.60 L1096.18 706.19 L1104.14 722.82 L1112.09 791.34 L1120.05 703.17 L1128.00 719.98 L1135.96 791.03 L1143.92 706.38" fill="none" stroke="#F4D598" stroke-width="1.15" stroke-linejoin="round"/>
<path d="M660.00 781.15 L666.56 751.89 L674.51 758.67 L682.47 750.70 L690.42 714.55 L698.38 721.55 L706.34 785.79 L714.29 713.34 L722.25 722.63 L730.20 779.87 L738.16 718.34 L746.12 722.40 L754.07 780.55 L762.03 711.89 L769.98 721.75 L777.94 781.89 L785.90 713.41 L793.85 715.54 L801.81 779.60 L809.76 714.73 L817.72 715.24 L825.68 785.02 L833.63 711.58 L841.59 721.64 L849.54 785.85 L857.50 717.35 L865.46 722.08 L873.41 780.43 L881.37 715.22 L889.32 720.51 L897.28 782.77 L905.24 713.62 L913.19 720.76 L921.15 790.37 L929.10 715.20 L937.06 722.06 L945.02 785.68 L952.97 710.51 L960.93 720.59 L968.88 785.52 L976.84 711.80 L984.80 750.72 L992.75 749.71 L1000.71 707.39 L1008.66 722.37 L1016.62 789.84 L1024.58 709.10 L1032.53 716.17 L1040.49 787.62 L1048.44 710.88 L1056.40 717.26 L1064.36 794.80 L1072.31 708.35 L1080.27 717.55 L1088.22 797.55 L1096.18 708.35 L1104.14 722.85 L1112.09 792.44 L1120.05 705.30 L1128.00 718.32 L1135.96 790.85 L1143.92 706.72" fill="none" stroke="#70DBED" stroke-width="1.15" stroke-linejoin="round"/>
<path d="M660.00 719.55 L666.56 783.31 L674.51 710.53 L682.47 717.03 L690.42 780.84 L698.38 717.25 L706.34 715.40 L714.29 780.95 L722.25 711.12 L730.20 723.00 L738.16 759.01 L746.12 753.51 L754.07 720.45 L762.03 775.16 L769.98 713.06 L777.94 723.06 L785.90 782.33 L793.85 715.21 L801.81 718.95 L809.76 774.89 L817.72 716.04 L825.68 721.49 L833.63 785.15 L841.59 710.00 L849.54 722.51 L857.50 787.49 L865.46 718.16 L873.41 721.33 L881.37 778.94 L889.32 708.56 L897.28 719.35 L905.24 779.38 L913.19 707.84 L921.15 722.31 L929.10 788.21 L937.06 708.72 L945.02 717.88 L952.97 791.59 L960.93 709.14 L968.88 721.29 L976.84 789.43 L984.80 711.45 L992.75 722.54 L1000.71 793.77 L1008.66 711.57 L1016.62 721.17 L1024.58 786.50 L1032.53 711.84 L1040.49 716.55 L1048.44 794.83 L1056.40 708.84 L1064.36 747.97 L1072.31 748.47 L1080.27 708.97 L1088.22 723.30 L1096.18 794.53 L1104.14 708.95 L1112.09 717.02 L1120.05 798.55 L1128.00 707.61 L1135.96 716.99 L1143.92 801.44" fill="none" stroke="#F9BA8F" stroke-width="1.15" stroke-linejoin="round"/>
<path d="M660.00 716.99 L666.56 716.03 L674.51 774.27 L682.47 713.48 L690.42 721.59 L698.38 776.54 L706.34 715.71 L714.29 719.94 L722.25 784.54 L730.20 713.96 L738.16 718.96 L746.12 780.74 L754.07 717.33 L762.03 720.74 L769.98 785.24 L777.94 715.39 L785.90 721.86 L793.85 780.66 L801.81 717.38 L809.76 722.79 L817.72 782.90 L825.68 715.98 L833.63 720.43 L841.59 780.84 L849.54 712.33 L857.50 717.75 L865.46 780.31 L873.41 710.49 L881.37 721.65 L889.32 786.40 L897.28 708.12 L905.24 722.02 L913.19 783.68 L921.15 711.77 L929.10 723.22 L937.06 782.44 L945.02 708.22 L952.97 719.67 L960.93 784.53 L968.88 709.17 L976.84 723.06 L984.80 788.13 L992.75 708.83 L1000.71 717.12 L1008.66 785.25 L1016.62 706.61 L1024.58 719.96 L1032.53 786.96 L1040.49 706.00 L1048.44 718.01 L1056.40 794.78 L1064.36 713.22 L1072.31 722.63 L1080.27 793.60 L1088.22 710.97 L1096.18 718.06 L1104.14 792.63 L1112.09 704.60 L1120.05 719.67 L1128.00 793.98 L1135.96 706.57 L1143.92 723.77" fill="none" stroke="#F29191" stroke-width="1.15" stroke-linejoin="round"/>
<path d="M660.00 783.00 L666.56 715.93 L674.51 719.88 L682.47 783.71 L690.42 713.62 L698.38 721.31 L706.34 784.62 L714.29 712.71 L722.25 723.89 L730.20 781.75 L738.16 717.43 L746.12 723.57 L754.07 781.89 L762.03 711.85 L769.98 723.79 L777.94 783.76 L785.90 713.19 L793.85 717.12 L801.81 778.72 L809.76 715.21 L817.72 716.44 L825.68 786.62 L833.63 711.12 L841.59 722.65 L849.54 786.50 L857.50 718.14 L865.46 720.77 L873.41 779.86 L881.37 716.53 L889.32 719.39 L897.28 781.83 L905.24 714.44 L913.19 718.80 L921.15 790.13 L929.10 715.51 L937.06 721.27 L945.02 784.88 L952.97 711.68 L960.93 720.83 L968.88 785.49 L976.84 711.21 L984.80 720.59 L992.75 785.07 L1000.71 707.74 L1008.66 722.04 L1016.62 789.31 L1024.58 710.00 L1032.53 718.08 L1040.49 789.45 L1048.44 709.70 L1056.40 717.00 L1064.36 796.65 L1072.31 709.54 L1080.27 717.21 L1088.22 795.64 L1096.18 706.85 L1104.14 723.84 L1112.09 792.89 L1120.05 704.76 L1128.00 719.49 L1135.96 792.02 L1143.92 707.59" fill="none" stroke="#82B5D8" stroke-width="1.15" stroke-linejoin="round"/>
<path d="M660.00 740.83 L666.56 741.21 L674.51 738.22 L682.47 737.91 L690.42 737.09 L698.38 737.54 L706.34 740.00 L714.29 738.45 L722.25 737.66 L730.20 738.48 L738.16 741.54 L746.12 742.96 L754.07 743.50 L762.03 746.08 L769.98 748.34 L777.94 744.86 L785.90 738.31 L793.85 732.54 L801.81 732.69 L809.76 735.80 L817.72 738.96 L825.68 740.92 L833.63 739.92 L841.59 739.47 L849.54 736.72 L857.50 735.50 L865.46 734.85 L873.41 733.77 L881.37 735.84 L889.32 736.01 L897.28 735.26 L905.24 735.09 L913.19 734.65 L921.15 737.27 L929.10 736.19 L937.06 734.43 L945.02 735.01 L952.97 735.62 L960.93 737.32 L968.88 738.81 L976.84 739.77 L984.80 741.71 L992.75 740.54 L1000.71 739.83 L1008.66 739.35 L1016.62 735.81 L1024.58 733.49 L1032.53 731.81 L1040.49 734.85 L1048.44 740.73 L1056.40 746.42 L1064.36 750.14 L1072.31 748.03 L1080.27 743.28 L1088.22 739.71 L1096.18 736.70 L1104.14 736.79 L1112.09 739.54 L1120.05 742.01 L1128.00 743.66 L1135.96 745.23 L1143.92 747.68" fill="none" stroke="#E5A8E2" stroke-width="1.15" stroke-linejoin="round"/>
<path d="M737.26 784.49 l0.9 4.5 l0.9 -4.5" fill="none" stroke="#BA43A9" stroke-width="1.4"/>
<path d="M761.13 776.90 l0.9 4.5 l0.9 -4.5" fill="none" stroke="#705DA0" stroke-width="1.4"/>
<path d="M785.00 784.47 l0.9 4.5 l0.9 -4.5" fill="none" stroke="#BA43A9" stroke-width="1.4"/>
<path d="M808.86 777.18 l0.9 4.5 l0.9 -4.5" fill="none" stroke="#705DA0" stroke-width="1.4"/>
<path d="M832.73 785.91 l0.9 4.5 l0.9 -4.5" fill="none" stroke="#BA43A9" stroke-width="1.4"/>
<path d="M856.60 788.66 l0.9 4.5 l0.9 -4.5" fill="none" stroke="#705DA0" stroke-width="1.4"/>
<path d="M952.07 793.16 l0.9 4.5 l0.9 -4.5" fill="none" stroke="#BA43A9" stroke-width="1.4"/>
<path d="M975.94 790.68 l0.9 4.5 l0.9 -4.5" fill="none" stroke="#705DA0" stroke-width="1.4"/>
<path d="M1023.68 786.78 l0.9 4.5 l0.9 -4.5" fill="none" stroke="#BA43A9" stroke-width="1.4"/>
<path d="M1047.54 795.63 l0.9 4.5 l0.9 -4.5" fill="none" stroke="#705DA0" stroke-width="1.4"/>
<path d="M1071.41 790.32 l0.9 4.5 l0.9 -4.5" fill="none" stroke="#BA43A9" stroke-width="1.4"/>
<path d="M1095.28 795.01 l0.9 4.5 l0.9 -4.5" fill="none" stroke="#705DA0" stroke-width="1.4"/>
<path d="M1119.15 799.00 l0.9 4.5 l0.9 -4.5" fill="none" stroke="#BA43A9" stroke-width="1.4"/>
<path d="M1143.02 801.77 l0.9 4.5 l0.9 -4.5" fill="none" stroke="#705DA0" stroke-width="1.4"/>
<rect x="660" y="631.70" width="484.00" height="1.6" fill="#AEA2E0"/>
<text x="654.40" y="604.90" font-size="12" text-anchor="end" font-weight="normal" fill="#ccccdc" textLength="20.21" lengthAdjust="spacingAndGlyphs">500</text>
<text x="654.40" y="635.47" font-size="12" text-anchor="end" font-weight="normal" fill="#ccccdc" textLength="6.74" lengthAdjust="spacingAndGlyphs">0</text>
<text x="654.40" y="666.04" font-size="12" text-anchor="end" font-weight="normal" fill="#ccccdc" textLength="23.53" lengthAdjust="spacingAndGlyphs">-500</text>
<text x="654.40" y="696.61" font-size="12" text-anchor="end" font-weight="normal" fill="#ccccdc" textLength="30.26" lengthAdjust="spacingAndGlyphs">-1000</text>
<text x="654.40" y="727.19" font-size="12" text-anchor="end" font-weight="normal" fill="#ccccdc" textLength="30.26" lengthAdjust="spacingAndGlyphs">-1500</text>
<text x="654.40" y="757.76" font-size="12" text-anchor="end" font-weight="normal" fill="#ccccdc" textLength="30.26" lengthAdjust="spacingAndGlyphs">-2000</text>
<text x="654.40" y="788.33" font-size="12" text-anchor="end" font-weight="normal" fill="#ccccdc" textLength="30.26" lengthAdjust="spacingAndGlyphs">-2500</text>
<text x="654.40" y="818.90" font-size="12" text-anchor="end" font-weight="normal" fill="#ccccdc" textLength="30.26" lengthAdjust="spacingAndGlyphs">-3000</text>
<g transform="translate(615.6 716) rotate(-90)"><text x="0.00" y="0.00" font-size="12" text-anchor="middle" font-weight="normal" fill="#ccccdc" textLength="30.90" lengthAdjust="spacingAndGlyphs">ops/s</text></g>
<text x="690.30" y="834.20" font-size="12" text-anchor="middle" font-weight="normal" fill="#ccccdc" textLength="29.86" lengthAdjust="spacingAndGlyphs">15:14</text>
<text x="786.30" y="834.20" font-size="12" text-anchor="middle" font-weight="normal" fill="#ccccdc" textLength="29.86" lengthAdjust="spacingAndGlyphs">15:16</text>
<text x="881.30" y="834.20" font-size="12" text-anchor="middle" font-weight="normal" fill="#ccccdc" textLength="29.86" lengthAdjust="spacingAndGlyphs">15:18</text>
<text x="976.30" y="834.20" font-size="12" text-anchor="middle" font-weight="normal" fill="#ccccdc" textLength="29.86" lengthAdjust="spacingAndGlyphs">15:20</text>
<text x="1072.30" y="834.20" font-size="12" text-anchor="middle" font-weight="normal" fill="#ccccdc" textLength="29.86" lengthAdjust="spacingAndGlyphs">15:22</text>
<rect x="612.90" y="853.00" width="14" height="4" rx="1" fill="#7EB26D"/>
<text x="635.10" y="857.70" font-size="12" text-anchor="start" font-weight="normal" fill="#ccccdc" textLength="32.60" lengthAdjust="spacingAndGlyphs">sdb-w</text>
<text x="673.80" y="857.70" font-size="12" text-anchor="start" font-weight="normal" fill="#ccccdc" textLength="57.55" lengthAdjust="spacingAndGlyphs">Avg: -1727</text>
<rect x="741.15" y="853.00" width="14" height="4" rx="1" fill="#EAB839"/>
<text x="763.35" y="857.70" font-size="12" text-anchor="start" font-weight="normal" fill="#ccccdc" textLength="32.14" lengthAdjust="spacingAndGlyphs">sdc-w</text>
<text x="801.59" y="857.70" font-size="12" text-anchor="start" font-weight="normal" fill="#ccccdc" textLength="57.55" lengthAdjust="spacingAndGlyphs">Avg: -1753</text>
<rect x="868.94" y="853.00" width="14" height="4" rx="1" fill="#6ED0E0"/>
<text x="891.14" y="857.70" font-size="12" text-anchor="start" font-weight="normal" fill="#ccccdc" textLength="32.64" lengthAdjust="spacingAndGlyphs">sdd-w</text>
<text x="929.88" y="857.70" font-size="12" text-anchor="start" font-weight="normal" fill="#ccccdc" textLength="57.55" lengthAdjust="spacingAndGlyphs">Avg: -1727</text>
<rect x="997.23" y="853.00" width="14" height="4" rx="1" fill="#EF843C"/>
<text x="1019.43" y="857.70" font-size="12" text-anchor="start" font-weight="normal" fill="#ccccdc" textLength="32.22" lengthAdjust="spacingAndGlyphs">sde-w</text>
<text x="1057.75" y="857.70" font-size="12" text-anchor="start" font-weight="normal" fill="#ccccdc" textLength="57.55" lengthAdjust="spacingAndGlyphs">Avg: -1733</text>
<rect x="612.90" y="871.00" width="14" height="4" rx="1" fill="#E24D42"/>
<text x="635.10" y="875.70" font-size="12" text-anchor="start" font-weight="normal" fill="#ccccdc" textLength="29.95" lengthAdjust="spacingAndGlyphs">sdf-w</text>
<text x="671.15" y="875.70" font-size="12" text-anchor="start" font-weight="normal" fill="#ccccdc" textLength="57.48" lengthAdjust="spacingAndGlyphs">Avg: -1727</text>
<rect x="738.43" y="871.00" width="14" height="4" rx="1" fill="#1F78C1"/>
<text x="760.63" y="875.70" font-size="12" text-anchor="start" font-weight="normal" fill="#ccccdc" textLength="32.56" lengthAdjust="spacingAndGlyphs">sdg-w</text>
<text x="799.29" y="875.70" font-size="12" text-anchor="start" font-weight="normal" fill="#ccccdc" textLength="57.48" lengthAdjust="spacingAndGlyphs">Avg: -1770</text>
<rect x="866.56" y="871.00" width="14" height="4" rx="1" fill="#BA43A9"/>
<text x="888.76" y="875.70" font-size="12" text-anchor="start" font-weight="normal" fill="#ccccdc" textLength="27.52" lengthAdjust="spacingAndGlyphs">sdb-r</text>
<text x="922.38" y="875.70" font-size="12" text-anchor="start" font-weight="normal" fill="#ccccdc" textLength="71.03" lengthAdjust="spacingAndGlyphs">Avg: 0.00161</text>
<rect x="1003.21" y="871.00" width="14" height="4" rx="1" fill="#705DA0"/>
<text x="1025.41" y="875.70" font-size="12" text-anchor="start" font-weight="normal" fill="#ccccdc" textLength="27.06" lengthAdjust="spacingAndGlyphs">sdc-r</text>
<text x="1058.57" y="875.70" font-size="12" text-anchor="start" font-weight="normal" fill="#ccccdc" textLength="71.03" lengthAdjust="spacingAndGlyphs">Avg: 0.00161</text>
<rect x="612.90" y="889.00" width="14" height="4" rx="1" fill="#508642"/>
<text x="635.10" y="893.70" font-size="12" text-anchor="start" font-weight="normal" fill="#ccccdc" textLength="27.65" lengthAdjust="spacingAndGlyphs">sdd-r</text>
<text x="668.85" y="893.70" font-size="12" text-anchor="start" font-weight="normal" fill="#ccccdc" textLength="71.28" lengthAdjust="spacingAndGlyphs">Avg: 0.00161</text>
<rect x="749.94" y="889.00" width="14" height="4" rx="1" fill="#CCA300"/>
<text x="772.14" y="893.70" font-size="12" text-anchor="start" font-weight="normal" fill="#ccccdc" textLength="27.24" lengthAdjust="spacingAndGlyphs">sde-r</text>
<text x="805.47" y="893.70" font-size="12" text-anchor="start" font-weight="normal" fill="#ccccdc" textLength="71.28" lengthAdjust="spacingAndGlyphs">Avg: 0.00161</text>
<rect x="886.55" y="889.00" width="14" height="4" rx="1" fill="#447EBC"/>
<text x="908.75" y="893.70" font-size="12" text-anchor="start" font-weight="normal" fill="#ccccdc" textLength="25.00" lengthAdjust="spacingAndGlyphs">sdf-r</text>
<text x="939.85" y="893.70" font-size="12" text-anchor="start" font-weight="normal" fill="#ccccdc" textLength="71.28" lengthAdjust="spacingAndGlyphs">Avg: 0.00161</text>
<rect x="1020.93" y="889.00" width="14" height="4" rx="1" fill="#C15C17"/>
<text x="1043.13" y="893.70" font-size="12" text-anchor="start" font-weight="normal" fill="#ccccdc" textLength="27.62" lengthAdjust="spacingAndGlyphs">sdg-r</text>
<text x="1076.85" y="893.70" font-size="12" text-anchor="start" font-weight="normal" fill="#ccccdc" textLength="50.65" lengthAdjust="spacingAndGlyphs">Avg: 1.29</text>
<rect x="612.90" y="907.00" width="14" height="4" rx="1" fill="#890F02"/>
<text x="635.10" y="911.70" font-size="12" text-anchor="start" font-weight="normal" fill="#ccccdc" textLength="27.42" lengthAdjust="spacingAndGlyphs">sdh-r</text>
<text x="668.62" y="911.70" font-size="12" text-anchor="start" font-weight="normal" fill="#ccccdc" textLength="71.09" lengthAdjust="spacingAndGlyphs">Avg: 0.00161</text>
<rect x="749.50" y="907.00" width="14" height="4" rx="1" fill="#0A437C"/>
<text x="771.70" y="911.70" font-size="12" text-anchor="start" font-weight="normal" fill="#ccccdc" textLength="23.65" lengthAdjust="spacingAndGlyphs">sdi-r</text>
<text x="801.46" y="911.70" font-size="12" text-anchor="start" font-weight="normal" fill="#ccccdc" textLength="71.09" lengthAdjust="spacingAndGlyphs">Avg: 0.00161</text>
<rect x="882.34" y="907.00" width="14" height="4" rx="1" fill="#6D1F62"/>
<text x="904.54" y="911.70" font-size="12" text-anchor="start" font-weight="normal" fill="#ccccdc" textLength="23.61" lengthAdjust="spacingAndGlyphs">sdj-r</text>
<text x="934.25" y="911.70" font-size="12" text-anchor="start" font-weight="normal" fill="#ccccdc" textLength="71.09" lengthAdjust="spacingAndGlyphs">Avg: 0.00161</text>
<rect x="1015.13" y="907.00" width="14" height="4" rx="1" fill="#584477"/>
<text x="1037.33" y="911.70" font-size="12" text-anchor="start" font-weight="normal" fill="#ccccdc" textLength="26.88" lengthAdjust="spacingAndGlyphs">sdk-r</text>
<text x="1070.31" y="911.70" font-size="12" text-anchor="start" font-weight="normal" fill="#ccccdc" textLength="71.09" lengthAdjust="spacingAndGlyphs">Avg: 0.00161</text>
<rect x="612.90" y="925.00" width="14" height="4" rx="1" fill="#B7DBAB"/>
<text x="635.10" y="929.70" font-size="12" text-anchor="start" font-weight="normal" fill="#ccccdc" textLength="23.69" lengthAdjust="spacingAndGlyphs">sdl-r</text>
<text x="664.89" y="929.70" font-size="12" text-anchor="start" font-weight="normal" fill="#ccccdc" textLength="71.18" lengthAdjust="spacingAndGlyphs">Avg: 0.00161</text>
<rect x="745.87" y="925.00" width="14" height="4" rx="1" fill="#F4D598"/>
<text x="768.07" y="929.70" font-size="12" text-anchor="start" font-weight="normal" fill="#ccccdc" textLength="32.51" lengthAdjust="spacingAndGlyphs">sdh-w</text>
<text x="806.67" y="929.70" font-size="12" text-anchor="start" font-weight="normal" fill="#ccccdc" textLength="57.60" lengthAdjust="spacingAndGlyphs">Avg: -1729</text>
<rect x="874.07" y="925.00" width="14" height="4" rx="1" fill="#70DBED"/>
<text x="896.27" y="929.70" font-size="12" text-anchor="start" font-weight="normal" fill="#ccccdc" textLength="28.74" lengthAdjust="spacingAndGlyphs">sdi-w</text>
<text x="931.11" y="929.70" font-size="12" text-anchor="start" font-weight="normal" fill="#ccccdc" textLength="57.60" lengthAdjust="spacingAndGlyphs">Avg: -1714</text>
<rect x="998.51" y="925.00" width="14" height="4" rx="1" fill="#F9BA8F"/>
<text x="1020.71" y="929.70" font-size="12" text-anchor="start" font-weight="normal" fill="#ccccdc" textLength="28.69" lengthAdjust="spacingAndGlyphs">sdj-w</text>
<text x="1055.50" y="929.70" font-size="12" text-anchor="start" font-weight="normal" fill="#ccccdc" textLength="57.60" lengthAdjust="spacingAndGlyphs">Avg: -1727</text>
<rect x="612.90" y="943.00" width="14" height="4" rx="1" fill="#F29191"/>
<text x="635.10" y="947.70" font-size="12" text-anchor="start" font-weight="normal" fill="#ccccdc" textLength="31.93" lengthAdjust="spacingAndGlyphs">sdk-w</text>
<text x="673.13" y="947.70" font-size="12" text-anchor="start" font-weight="normal" fill="#ccccdc" textLength="57.52" lengthAdjust="spacingAndGlyphs">Avg: -1735</text>
<rect x="740.45" y="943.00" width="14" height="4" rx="1" fill="#82B5D8"/>
<text x="762.65" y="947.70" font-size="12" text-anchor="start" font-weight="normal" fill="#ccccdc" textLength="28.70" lengthAdjust="spacingAndGlyphs">sdl-w</text>
<text x="797.45" y="947.70" font-size="12" text-anchor="start" font-weight="normal" fill="#ccccdc" textLength="57.52" lengthAdjust="spacingAndGlyphs">Avg: -1739</text>
<rect x="864.77" y="943.00" width="14" height="4" rx="1" fill="#E5A8E2"/>
<text x="886.97" y="947.70" font-size="12" text-anchor="start" font-weight="normal" fill="#ccccdc" textLength="44.72" lengthAdjust="spacingAndGlyphs">Mean-W</text>
<text x="937.80" y="947.70" font-size="12" text-anchor="start" font-weight="normal" fill="#ccccdc" textLength="57.52" lengthAdjust="spacingAndGlyphs">Avg: -1735</text>
<rect x="1005.12" y="943.00" width="14" height="4" rx="1" fill="#AEA2E0"/>
<text x="1027.32" y="947.70" font-size="12" text-anchor="start" font-weight="normal" fill="#ccccdc" textLength="41.41" lengthAdjust="spacingAndGlyphs">Mean-R</text>
<text x="1074.83" y="947.70" font-size="12" text-anchor="start" font-weight="normal" fill="#ccccdc" textLength="57.37" lengthAdjust="spacingAndGlyphs">Avg: 0.119</text>
</svg></div>
<div class="panel" style="left:1183.33px;top:552px;width:581.67px;height:410px">
<svg class="ptitle" width="581.67" height="30" viewBox="1183.33 552 581.67 30" style="left:-1px;top:-1px"><text x="1474.37" y="574.20" font-size="14" text-anchor="middle" font-weight="normal" fill="#ccccdc" stroke="#ccccdc" stroke-width="0.5" textLength="96.30" lengthAdjust="spacingAndGlyphs">Disk Utilization</text></svg>
<svg class="pbody" width="581.67" height="380" viewBox="1183.33 582 581.67 380" style="left:-1px;top:29px">
<rect x="1227.00" y="623" width="513.00" height="1" fill="#424449"/>
<rect x="1227.00" y="675" width="513.00" height="1" fill="#424449"/>
<rect x="1227.00" y="728" width="513.00" height="1" fill="#424449"/>
<rect x="1227.00" y="781" width="513.00" height="1" fill="#424449"/>
<rect x="1227.00" y="833" width="513.00" height="1" fill="#424449"/>
<rect x="1259" y="602" width="1" height="232" fill="#424449"/>
<rect x="1358" y="602" width="1" height="232" fill="#424449"/>
<rect x="1458" y="602" width="1" height="232" fill="#424449"/>
<rect x="1558" y="602" width="1" height="232" fill="#424449"/>
<rect x="1657" y="602" width="1" height="232" fill="#424449"/>
<path d="M1227.00 648.91 L1234.79 650.23 L1243.08 647.15 L1251.36 643.79 L1259.65 643.57 L1267.94 646.98 L1276.22 638.86 L1284.51 637.96 L1292.80 653.70 L1301.09 651.51 L1309.38 642.03 L1317.66 642.49 L1325.95 639.83 L1334.24 651.48 L1342.53 647.81 L1350.81 653.00 L1359.10 653.45 L1367.39 651.53 L1375.67 658.69 L1383.96 650.18 L1392.25 638.68 L1400.54 642.98 L1408.83 642.84 L1417.11 641.46 L1425.40 651.88 L1433.69 656.20 L1441.97 646.76 L1450.26 654.64 L1458.55 648.59 L1466.84 650.88 L1475.12 646.21 L1483.41 653.68 L1491.70 650.43 L1499.99 651.44 L1508.28 665.17 L1516.56 648.09 L1524.85 648.46 L1533.14 649.59 L1541.42 650.65 L1549.71 646.10 L1558.00 648.19 L1566.29 647.53 L1574.58 657.97 L1582.86 652.16 L1591.15 647.51 L1599.44 644.87 L1607.72 649.31 L1616.01 650.65 L1624.30 663.94 L1632.59 652.76 L1640.88 660.36 L1649.16 661.62 L1657.45 639.50 L1665.74 661.66 L1674.03 648.83 L1682.31 656.86 L1690.60 658.35 L1698.89 648.08 L1707.17 646.57 L1715.46 657.54 L1723.75 650.29 L1732.04 646.81 L1732.04 833.90 L1227.00 833.90 Z" fill="#EAB839" fill-opacity="0.108"/>
<path d="M1227.00 644.92 L1234.79 646.43 L1243.08 648.26 L1251.36 651.41 L1259.65 637.19 L1267.94 644.32 L1276.22 641.75 L1284.51 645.04 L1292.80 652.93 L1301.09 651.94 L1309.38 647.95 L1317.66 636.52 L1325.95 650.24 L1334.24 647.12 L1342.53 647.43 L1350.81 651.12 L1359.10 649.48 L1367.39 648.82 L1375.67 657.62 L1383.96 655.15 L1392.25 646.97 L1400.54 648.19 L1408.83 643.16 L1417.11 652.29 L1425.40 648.91 L1433.69 652.06 L1441.97 646.84 L1450.26 656.87 L1458.55 655.26 L1466.84 648.50 L1475.12 649.57 L1483.41 659.33 L1491.70 648.89 L1499.99 651.79 L1508.28 664.83 L1516.56 647.78 L1524.85 641.78 L1533.14 653.84 L1541.42 644.06 L1549.71 643.77 L1558.00 653.36 L1566.29 647.78 L1574.58 652.16 L1582.86 658.99 L1591.15 648.09 L1599.44 651.87 L1607.72 651.95 L1616.01 655.61 L1624.30 663.85 L1632.59 648.54 L1640.88 661.32 L1649.16 656.48 L1657.45 642.04 L1665.74 662.70 L1674.03 645.83 L1682.31 643.34 L1690.60 659.90 L1698.89 646.20 L1707.17 639.14 L1715.46 657.34 L1723.75 644.58 L1732.04 649.63 L1732.04 833.90 L1227.00 833.90 Z" fill="#6ED0E0" fill-opacity="0.108"/>
<path d="M1227.00 651.42 L1234.79 651.77 L1243.08 643.16 L1251.36 638.71 L1259.65 645.00 L1267.94 648.24 L1276.22 645.68 L1284.51 650.36 L1292.80 647.48 L1301.09 639.64 L1309.38 649.96 L1317.66 646.47 L1325.95 653.48 L1334.24 653.00 L1342.53 651.47 L1350.81 652.53 L1359.10 650.06 L1367.39 650.49 L1375.67 657.99 L1383.96 657.30 L1392.25 654.71 L1400.54 647.80 L1408.83 649.35 L1417.11 640.30 L1425.40 648.26 L1433.69 641.16 L1441.97 645.54 L1450.26 647.49 L1458.55 656.62 L1466.84 641.49 L1475.12 653.09 L1483.41 666.12 L1491.70 653.68 L1499.99 646.60 L1508.28 663.11 L1516.56 649.57 L1524.85 649.58 L1533.14 652.76 L1541.42 645.95 L1549.71 647.31 L1558.00 653.85 L1566.29 646.37 L1574.58 648.99 L1582.86 654.72 L1591.15 643.15 L1599.44 653.99 L1607.72 655.90 L1616.01 651.87 L1624.30 653.53 L1632.59 650.86 L1640.88 669.17 L1649.16 657.02 L1657.45 641.24 L1665.74 664.38 L1674.03 649.61 L1682.31 654.41 L1690.60 654.35 L1698.89 646.68 L1707.17 645.74 L1715.46 657.76 L1723.75 650.85 L1732.04 653.19 L1732.04 833.90 L1227.00 833.90 Z" fill="#EF843C" fill-opacity="0.108"/>
<path d="M1227.00 649.52 L1234.79 642.67 L1243.08 646.41 L1251.36 646.17 L1259.65 638.68 L1267.94 652.57 L1276.22 643.43 L1284.51 650.03 L1292.80 646.09 L1301.09 653.53 L1309.38 645.16 L1317.66 651.47 L1325.95 653.33 L1334.24 648.29 L1342.53 649.97 L1350.81 648.81 L1359.10 653.08 L1367.39 642.46 L1375.67 648.15 L1383.96 654.00 L1392.25 653.38 L1400.54 644.08 L1408.83 644.05 L1417.11 641.98 L1425.40 642.80 L1433.69 651.36 L1441.97 647.53 L1450.26 648.66 L1458.55 657.98 L1466.84 635.30 L1475.12 649.79 L1483.41 661.86 L1491.70 653.94 L1499.99 642.48 L1508.28 666.34 L1516.56 646.11 L1524.85 648.30 L1533.14 648.50 L1541.42 642.45 L1549.71 645.24 L1558.00 653.04 L1566.29 645.06 L1574.58 652.93 L1582.86 657.85 L1591.15 653.57 L1599.44 656.67 L1607.72 651.00 L1616.01 655.93 L1624.30 661.95 L1632.59 651.00 L1640.88 659.20 L1649.16 649.60 L1657.45 643.54 L1665.74 656.38 L1674.03 653.71 L1682.31 654.54 L1690.60 659.51 L1698.89 658.08 L1707.17 651.38 L1715.46 650.99 L1723.75 651.77 L1732.04 643.21 L1732.04 833.90 L1227.00 833.90 Z" fill="#E24D42" fill-opacity="0.108"/>
<path d="M1227.00 642.15 L1234.79 650.03 L1243.08 647.15 L1251.36 647.78 L1259.65 643.66 L1267.94 646.80 L1276.22 632.47 L1284.51 645.33 L1292.80 645.43 L1301.09 639.58 L1309.38 646.25 L1317.66 648.09 L1325.95 645.92 L1334.24 652.73 L1342.53 649.86 L1350.81 647.95 L1359.10 649.14 L1367.39 649.00 L1375.67 659.29 L1383.96 647.42 L1392.25 637.98 L1400.54 643.28 L1408.83 648.94 L1417.11 648.75 L1425.40 649.93 L1433.69 656.18 L1441.97 652.28 L1450.26 653.03 L1458.55 644.24 L1466.84 642.15 L1475.12 651.93 L1483.41 661.19 L1491.70 652.94 L1499.99 652.30 L1508.28 667.47 L1516.56 643.87 L1524.85 653.37 L1533.14 653.28 L1541.42 645.12 L1549.71 642.78 L1558.00 650.67 L1566.29 642.83 L1574.58 657.87 L1582.86 648.37 L1591.15 646.91 L1599.44 655.06 L1607.72 645.55 L1616.01 653.82 L1624.30 660.53 L1632.59 651.76 L1640.88 662.04 L1649.16 650.77 L1657.45 645.32 L1665.74 661.96 L1674.03 651.20 L1682.31 656.10 L1690.60 660.77 L1698.89 651.07 L1707.17 651.85 L1715.46 659.32 L1723.75 645.10 L1732.04 641.37 L1732.04 833.90 L1227.00 833.90 Z" fill="#1F78C1" fill-opacity="0.108"/>
<path d="M1227.00 649.25 L1234.79 643.72 L1243.08 642.66 L1251.36 639.55 L1259.65 644.56 L1267.94 648.95 L1276.22 641.64 L1284.51 647.48 L1292.80 651.04 L1301.09 654.66 L1309.38 651.37 L1317.66 650.22 L1325.95 646.25 L1334.24 656.62 L1342.53 644.99 L1350.81 651.60 L1359.10 652.81 L1367.39 643.18 L1375.67 658.25 L1383.96 655.60 L1392.25 645.15 L1400.54 647.98 L1408.83 639.05 L1417.11 648.97 L1425.40 652.46 L1433.69 642.47 L1441.97 644.80 L1450.26 654.21 L1458.55 648.56 L1466.84 642.35 L1475.12 651.74 L1483.41 660.75 L1491.70 654.00 L1499.99 650.89 L1508.28 667.63 L1516.56 646.53 L1524.85 651.59 L1533.14 656.30 L1541.42 650.88 L1549.71 645.78 L1558.00 652.76 L1566.29 650.82 L1574.58 653.13 L1582.86 657.82 L1591.15 648.46 L1599.44 656.29 L1607.72 650.69 L1616.01 648.91 L1624.30 657.01 L1632.59 647.40 L1640.88 659.66 L1649.16 660.24 L1657.45 637.55 L1665.74 660.04 L1674.03 647.16 L1682.31 649.60 L1690.60 656.42 L1698.89 653.87 L1707.17 646.01 L1715.46 656.66 L1723.75 647.33 L1732.04 653.48 L1732.04 833.90 L1227.00 833.90 Z" fill="#BA43A9" fill-opacity="0.108"/>
<path d="M1227.00 646.92 L1234.79 650.12 L1243.08 647.56 L1251.36 646.89 L1259.65 637.54 L1267.94 654.34 L1276.22 643.41 L1284.51 646.52 L1292.80 650.51 L1301.09 645.22 L1309.38 645.74 L1317.66 649.29 L1325.95 644.59 L1334.24 650.25 L1342.53 651.45 L1350.81 654.42 L1359.10 651.47 L1367.39 642.72 L1375.67 649.97 L1383.96 655.70 L1392.25 644.17 L1400.54 635.62 L1408.83 643.69 L1417.11 649.41 L1425.40 645.57 L1433.69 650.34 L1441.97 646.95 L1450.26 648.71 L1458.55 653.15 L1466.84 649.51 L1475.12 642.66 L1483.41 663.32 L1491.70 652.32 L1499.99 647.88 L1508.28 662.37 L1516.56 650.02 L1524.85 644.22 L1533.14 654.17 L1541.42 648.16 L1549.71 637.01 L1558.00 652.40 L1566.29 647.26 L1574.58 651.59 L1582.86 652.58 L1591.15 648.17 L1599.44 651.25 L1607.72 654.39 L1616.01 656.61 L1624.30 661.50 L1632.59 645.28 L1640.88 659.44 L1649.16 659.54 L1657.45 641.09 L1665.74 652.04 L1674.03 648.42 L1682.31 642.28 L1690.60 658.41 L1698.89 654.41 L1707.17 652.63 L1715.46 658.31 L1723.75 644.25 L1732.04 652.27 L1732.04 833.90 L1227.00 833.90 Z" fill="#705DA0" fill-opacity="0.108"/>
<path d="M1227.00 652.42 L1234.79 638.16 L1243.08 645.43 L1251.36 642.98 L1259.65 642.32 L1267.94 654.59 L1276.22 639.57 L1284.51 653.06 L1292.80 647.33 L1301.09 646.58 L1309.38 652.13 L1317.66 649.31 L1325.95 645.00 L1334.24 653.42 L1342.53 643.28 L1350.81 653.80 L1359.10 652.12 L1367.39 644.91 L1375.67 651.25 L1383.96 648.31 L1392.25 648.96 L1400.54 644.64 L1408.83 648.27 L1417.11 651.81 L1425.40 643.69 L1433.69 649.00 L1441.97 648.51 L1450.26 655.18 L1458.55 646.72 L1466.84 642.73 L1475.12 654.76 L1483.41 661.66 L1491.70 656.25 L1499.99 652.94 L1508.28 657.73 L1516.56 646.26 L1524.85 648.11 L1533.14 648.59 L1541.42 645.03 L1549.71 640.36 L1558.00 644.48 L1566.29 642.36 L1574.58 653.92 L1582.86 653.76 L1591.15 651.26 L1599.44 656.40 L1607.72 657.13 L1616.01 655.68 L1624.30 658.48 L1632.59 656.20 L1640.88 663.92 L1649.16 661.58 L1657.45 637.47 L1665.74 663.33 L1674.03 653.00 L1682.31 650.85 L1690.60 654.70 L1698.89 652.33 L1707.17 639.81 L1715.46 660.34 L1723.75 647.27 L1732.04 639.63 L1732.04 833.90 L1227.00 833.90 Z" fill="#508642" fill-opacity="0.108"/>
<path d="M1227.00 654.26 L1234.79 649.63 L1243.08 650.25 L1251.36 649.64 L1259.65 632.26 L1267.94 647.29 L1276.22 635.90 L1284.51 646.78 L1292.80 644.32 L1301.09 653.59 L1309.38 645.58 L1317.66 636.58 L1325.95 646.15 L1334.24 656.61 L1342.53 647.33 L1350.81 650.87 L1359.10 658.03 L1367.39 649.87 L1375.67 654.87 L1383.96 656.05 L1392.25 645.41 L1400.54 640.81 L1408.83 639.34 L1417.11 650.86 L1425.40 651.77 L1433.69 653.42 L1441.97 653.24 L1450.26 644.63 L1458.55 650.88 L1466.84 642.90 L1475.12 647.44 L1483.41 666.68 L1491.70 655.46 L1499.99 652.92 L1508.28 660.69 L1516.56 648.33 L1524.85 638.37 L1533.14 651.36 L1541.42 638.49 L1549.71 639.86 L1558.00 641.86 L1566.29 648.71 L1574.58 650.58 L1582.86 651.42 L1591.15 640.98 L1599.44 656.39 L1607.72 656.45 L1616.01 648.65 L1624.30 660.68 L1632.59 653.63 L1640.88 663.84 L1649.16 660.97 L1657.45 642.32 L1665.74 655.78 L1674.03 648.50 L1682.31 650.13 L1690.60 662.01 L1698.89 655.91 L1707.17 649.18 L1715.46 660.90 L1723.75 644.46 L1732.04 652.42 L1732.04 833.90 L1227.00 833.90 Z" fill="#CCA300" fill-opacity="0.108"/>
<path d="M1227.00 653.29 L1234.79 637.33 L1243.08 646.39 L1251.36 644.61 L1259.65 637.77 L1267.94 651.92 L1276.22 646.15 L1284.51 645.19 L1292.80 644.11 L1301.09 651.57 L1309.38 644.62 L1317.66 642.79 L1325.95 644.73 L1334.24 648.56 L1342.53 651.05 L1350.81 648.44 L1359.10 652.49 L1367.39 637.91 L1375.67 657.87 L1383.96 648.41 L1392.25 641.31 L1400.54 648.07 L1408.83 642.90 L1417.11 642.34 L1425.40 652.77 L1433.69 653.64 L1441.97 648.64 L1450.26 649.06 L1458.55 657.38 L1466.84 644.36 L1475.12 642.17 L1483.41 655.95 L1491.70 655.80 L1499.99 652.93 L1508.28 662.37 L1516.56 650.16 L1524.85 652.21 L1533.14 650.40 L1541.42 648.01 L1549.71 639.02 L1558.00 648.95 L1566.29 645.50 L1574.58 654.75 L1582.86 651.61 L1591.15 644.85 L1599.44 652.35 L1607.72 646.98 L1616.01 649.51 L1624.30 663.58 L1632.59 649.58 L1640.88 660.06 L1649.16 655.91 L1657.45 644.43 L1665.74 654.18 L1674.03 641.57 L1682.31 651.06 L1690.60 651.20 L1698.89 646.13 L1707.17 641.73 L1715.46 659.28 L1723.75 645.50 L1732.04 647.69 L1732.04 833.90 L1227.00 833.90 Z" fill="#447EBC" fill-opacity="0.108"/>
<path d="M1227.00 651.57 L1234.79 641.98 L1243.08 639.75 L1251.36 651.83 L1259.65 639.52 L1267.94 642.42 L1276.22 643.98 L1284.51 655.05 L1292.80 642.57 L1301.09 652.77 L1309.38 652.99 L1317.66 641.53 L1325.95 647.21 L1334.24 646.38 L1342.53 640.93 L1350.81 648.56 L1359.10 653.58 L1367.39 640.79 L1375.67 653.10 L1383.96 647.56 L1392.25 639.31 L1400.54 637.82 L1408.83 636.00 L1417.11 639.99 L1425.40 647.21 L1433.69 643.47 L1441.97 644.63 L1450.26 653.93 L1458.55 652.48 L1466.84 637.60 L1475.12 655.94 L1483.41 665.32 L1491.70 647.12 L1499.99 656.27 L1508.28 661.23 L1516.56 638.55 L1524.85 646.80 L1533.14 658.18 L1541.42 638.41 L1549.71 633.38 L1558.00 647.91 L1566.29 637.77 L1574.58 654.50 L1582.86 658.98 L1591.15 638.97 L1599.44 651.35 L1607.72 654.52 L1616.01 646.03 L1624.30 660.75 L1632.59 652.81 L1640.88 655.46 L1649.16 653.95 L1657.45 639.83 L1665.74 653.79 L1674.03 646.38 L1682.31 655.54 L1690.60 651.29 L1698.89 648.50 L1707.17 642.02 L1715.46 652.71 L1723.75 652.10 L1732.04 652.99 L1732.04 833.90 L1227.00 833.90 Z" fill="#C15C17" fill-opacity="0.108"/>
<path d="M1227.00 649.41 L1234.79 645.81 L1243.08 647.07 L1251.36 647.07 L1259.65 642.22 L1267.94 651.20 L1276.22 643.12 L1284.51 648.87 L1292.80 648.87 L1301.09 650.31 L1309.38 647.07 L1317.66 647.07 L1325.95 648.15 L1334.24 652.10 L1342.53 647.61 L1350.81 653.00 L1359.10 653.90 L1367.39 646.35 L1375.67 655.16 L1383.96 652.10 L1392.25 648.51 L1400.54 644.02 L1408.83 644.02 L1417.11 648.51 L1425.40 647.61 L1433.69 651.20 L1441.97 651.20 L1450.26 651.74 L1458.55 652.88 L1466.84 646.05 L1475.12 650.19 L1483.41 663.66 L1491.70 653.78 L1499.99 651.98 L1508.28 662.76 L1516.56 646.59 L1524.85 649.29 L1533.14 651.98 L1541.42 647.49 L1549.71 642.10 L1558.00 649.29 L1566.29 646.05 L1574.58 652.88 L1582.86 654.68 L1591.15 649.29 L1599.44 653.78 L1607.72 651.98 L1616.01 651.98 L1624.30 659.17 L1632.59 651.98 L1640.88 663.66 L1649.16 657.37 L1657.45 642.10 L1665.74 659.17 L1674.03 651.98 L1682.31 652.88 L1690.60 659.17 L1698.89 652.88 L1707.17 649.29 L1715.46 660.07 L1723.75 649.29 L1732.04 650.19 L1732.04 833.90 L1227.00 833.90 Z" fill="#890F02" fill-opacity="0.1"/>
<path d="M1227.00 648.91 L1234.79 650.23 L1243.08 647.15 L1251.36 643.79 L1259.65 643.57 L1267.94 646.98 L1276.22 638.86 L1284.51 637.96 L1292.80 653.70 L1301.09 651.51 L1309.38 642.03 L1317.66 642.49 L1325.95 639.83 L1334.24 651.48 L1342.53 647.81 L1350.81 653.00 L1359.10 653.45 L1367.39 651.53 L1375.67 658.69 L1383.96 650.18 L1392.25 638.68 L1400.54 642.98 L1408.83 642.84 L1417.11 641.46 L1425.40 651.88 L1433.69 656.20 L1441.97 646.76 L1450.26 654.64 L1458.55 648.59 L1466.84 650.88 L1475.12 646.21 L1483.41 653.68 L1491.70 650.43 L1499.99 651.44 L1508.28 665.17 L1516.56 648.09 L1524.85 648.46 L1533.14 649.59 L1541.42 650.65 L1549.71 646.10 L1558.00 648.19 L1566.29 647.53 L1574.58 657.97 L1582.86 652.16 L1591.15 647.51 L1599.44 644.87 L1607.72 649.31 L1616.01 650.65 L1624.30 663.94 L1632.59 652.76 L1640.88 660.36 L1649.16 661.62 L1657.45 639.50 L1665.74 661.66 L1674.03 648.83 L1682.31 656.86 L1690.60 658.35 L1698.89 648.08 L1707.17 646.57 L1715.46 657.54 L1723.75 650.29 L1732.04 646.81" fill="none" stroke="#EAB839" stroke-width="1" stroke-linejoin="round"/>
<path d="M1227.00 644.92 L1234.79 646.43 L1243.08 648.26 L1251.36 651.41 L1259.65 637.19 L1267.94 644.32 L1276.22 641.75 L1284.51 645.04 L1292.80 652.93 L1301.09 651.94 L1309.38 647.95 L1317.66 636.52 L1325.95 650.24 L1334.24 647.12 L1342.53 647.43 L1350.81 651.12 L1359.10 649.48 L1367.39 648.82 L1375.67 657.62 L1383.96 655.15 L1392.25 646.97 L1400.54 648.19 L1408.83 643.16 L1417.11 652.29 L1425.40 648.91 L1433.69 652.06 L1441.97 646.84 L1450.26 656.87 L1458.55 655.26 L1466.84 648.50 L1475.12 649.57 L1483.41 659.33 L1491.70 648.89 L1499.99 651.79 L1508.28 664.83 L1516.56 647.78 L1524.85 641.78 L1533.14 653.84 L1541.42 644.06 L1549.71 643.77 L1558.00 653.36 L1566.29 647.78 L1574.58 652.16 L1582.86 658.99 L1591.15 648.09 L1599.44 651.87 L1607.72 651.95 L1616.01 655.61 L1624.30 663.85 L1632.59 648.54 L1640.88 661.32 L1649.16 656.48 L1657.45 642.04 L1665.74 662.70 L1674.03 645.83 L1682.31 643.34 L1690.60 659.90 L1698.89 646.20 L1707.17 639.14 L1715.46 657.34 L1723.75 644.58 L1732.04 649.63" fill="none" stroke="#6ED0E0" stroke-width="1" stroke-linejoin="round"/>
<path d="M1227.00 651.42 L1234.79 651.77 L1243.08 643.16 L1251.36 638.71 L1259.65 645.00 L1267.94 648.24 L1276.22 645.68 L1284.51 650.36 L1292.80 647.48 L1301.09 639.64 L1309.38 649.96 L1317.66 646.47 L1325.95 653.48 L1334.24 653.00 L1342.53 651.47 L1350.81 652.53 L1359.10 650.06 L1367.39 650.49 L1375.67 657.99 L1383.96 657.30 L1392.25 654.71 L1400.54 647.80 L1408.83 649.35 L1417.11 640.30 L1425.40 648.26 L1433.69 641.16 L1441.97 645.54 L1450.26 647.49 L1458.55 656.62 L1466.84 641.49 L1475.12 653.09 L1483.41 666.12 L1491.70 653.68 L1499.99 646.60 L1508.28 663.11 L1516.56 649.57 L1524.85 649.58 L1533.14 652.76 L1541.42 645.95 L1549.71 647.31 L1558.00 653.85 L1566.29 646.37 L1574.58 648.99 L1582.86 654.72 L1591.15 643.15 L1599.44 653.99 L1607.72 655.90 L1616.01 651.87 L1624.30 653.53 L1632.59 650.86 L1640.88 669.17 L1649.16 657.02 L1657.45 641.24 L1665.74 664.38 L1674.03 649.61 L1682.31 654.41 L1690.60 654.35 L1698.89 646.68 L1707.17 645.74 L1715.46 657.76 L1723.75 650.85 L1732.04 653.19" fill="none" stroke="#EF843C" stroke-width="1" stroke-linejoin="round"/>
<path d="M1227.00 649.52 L1234.79 642.67 L1243.08 646.41 L1251.36 646.17 L1259.65 638.68 L1267.94 652.57 L1276.22 643.43 L1284.51 650.03 L1292.80 646.09 L1301.09 653.53 L1309.38 645.16 L1317.66 651.47 L1325.95 653.33 L1334.24 648.29 L1342.53 649.97 L1350.81 648.81 L1359.10 653.08 L1367.39 642.46 L1375.67 648.15 L1383.96 654.00 L1392.25 653.38 L1400.54 644.08 L1408.83 644.05 L1417.11 641.98 L1425.40 642.80 L1433.69 651.36 L1441.97 647.53 L1450.26 648.66 L1458.55 657.98 L1466.84 635.30 L1475.12 649.79 L1483.41 661.86 L1491.70 653.94 L1499.99 642.48 L1508.28 666.34 L1516.56 646.11 L1524.85 648.30 L1533.14 648.50 L1541.42 642.45 L1549.71 645.24 L1558.00 653.04 L1566.29 645.06 L1574.58 652.93 L1582.86 657.85 L1591.15 653.57 L1599.44 656.67 L1607.72 651.00 L1616.01 655.93 L1624.30 661.95 L1632.59 651.00 L1640.88 659.20 L1649.16 649.60 L1657.45 643.54 L1665.74 656.38 L1674.03 653.71 L1682.31 654.54 L1690.60 659.51 L1698.89 658.08 L1707.17 651.38 L1715.46 650.99 L1723.75 651.77 L1732.04 643.21" fill="none" stroke="#E24D42" stroke-width="1" stroke-linejoin="round"/>
<path d="M1227.00 642.15 L1234.79 650.03 L1243.08 647.15 L1251.36 647.78 L1259.65 643.66 L1267.94 646.80 L1276.22 632.47 L1284.51 645.33 L1292.80 645.43 L1301.09 639.58 L1309.38 646.25 L1317.66 648.09 L1325.95 645.92 L1334.24 652.73 L1342.53 649.86 L1350.81 647.95 L1359.10 649.14 L1367.39 649.00 L1375.67 659.29 L1383.96 647.42 L1392.25 637.98 L1400.54 643.28 L1408.83 648.94 L1417.11 648.75 L1425.40 649.93 L1433.69 656.18 L1441.97 652.28 L1450.26 653.03 L1458.55 644.24 L1466.84 642.15 L1475.12 651.93 L1483.41 661.19 L1491.70 652.94 L1499.99 652.30 L1508.28 667.47 L1516.56 643.87 L1524.85 653.37 L1533.14 653.28 L1541.42 645.12 L1549.71 642.78 L1558.00 650.67 L1566.29 642.83 L1574.58 657.87 L1582.86 648.37 L1591.15 646.91 L1599.44 655.06 L1607.72 645.55 L1616.01 653.82 L1624.30 660.53 L1632.59 651.76 L1640.88 662.04 L1649.16 650.77 L1657.45 645.32 L1665.74 661.96 L1674.03 651.20 L1682.31 656.10 L1690.60 660.77 L1698.89 651.07 L1707.17 651.85 L1715.46 659.32 L1723.75 645.10 L1732.04 641.37" fill="none" stroke="#1F78C1" stroke-width="1" stroke-linejoin="round"/>
<path d="M1227.00 649.25 L1234.79 643.72 L1243.08 642.66 L1251.36 639.55 L1259.65 644.56 L1267.94 648.95 L1276.22 641.64 L1284.51 647.48 L1292.80 651.04 L1301.09 654.66 L1309.38 651.37 L1317.66 650.22 L1325.95 646.25 L1334.24 656.62 L1342.53 644.99 L1350.81 651.60 L1359.10 652.81 L1367.39 643.18 L1375.67 658.25 L1383.96 655.60 L1392.25 645.15 L1400.54 647.98 L1408.83 639.05 L1417.11 648.97 L1425.40 652.46 L1433.69 642.47 L1441.97 644.80 L1450.26 654.21 L1458.55 648.56 L1466.84 642.35 L1475.12 651.74 L1483.41 660.75 L1491.70 654.00 L1499.99 650.89 L1508.28 667.63 L1516.56 646.53 L1524.85 651.59 L1533.14 656.30 L1541.42 650.88 L1549.71 645.78 L1558.00 652.76 L1566.29 650.82 L1574.58 653.13 L1582.86 657.82 L1591.15 648.46 L1599.44 656.29 L1607.72 650.69 L1616.01 648.91 L1624.30 657.01 L1632.59 647.40 L1640.88 659.66 L1649.16 660.24 L1657.45 637.55 L1665.74 660.04 L1674.03 647.16 L1682.31 649.60 L1690.60 656.42 L1698.89 653.87 L1707.17 646.01 L1715.46 656.66 L1723.75 647.33 L1732.04 653.48" fill="none" stroke="#BA43A9" stroke-width="1" stroke-linejoin="round"/>
<path d="M1227.00 646.92 L1234.79 650.12 L1243.08 647.56 L1251.36 646.89 L1259.65 637.54 L1267.94 654.34 L1276.22 643.41 L1284.51 646.52 L1292.80 650.51 L1301.09 645.22 L1309.38 645.74 L1317.66 649.29 L1325.95 644.59 L1334.24 650.25 L1342.53 651.45 L1350.81 654.42 L1359.10 651.47 L1367.39 642.72 L1375.67 649.97 L1383.96 655.70 L1392.25 644.17 L1400.54 635.62 L1408.83 643.69 L1417.11 649.41 L1425.40 645.57 L1433.69 650.34 L1441.97 646.95 L1450.26 648.71 L1458.55 653.15 L1466.84 649.51 L1475.12 642.66 L1483.41 663.32 L1491.70 652.32 L1499.99 647.88 L1508.28 662.37 L1516.56 650.02 L1524.85 644.22 L1533.14 654.17 L1541.42 648.16 L1549.71 637.01 L1558.00 652.40 L1566.29 647.26 L1574.58 651.59 L1582.86 652.58 L1591.15 648.17 L1599.44 651.25 L1607.72 654.39 L1616.01 656.61 L1624.30 661.50 L1632.59 645.28 L1640.88 659.44 L1649.16 659.54 L1657.45 641.09 L1665.74 652.04 L1674.03 648.42 L1682.31 642.28 L1690.60 658.41 L1698.89 654.41 L1707.17 652.63 L1715.46 658.31 L1723.75 644.25 L1732.04 652.27" fill="none" stroke="#705DA0" stroke-width="1" stroke-linejoin="round"/>
<path d="M1227.00 652.42 L1234.79 638.16 L1243.08 645.43 L1251.36 642.98 L1259.65 642.32 L1267.94 654.59 L1276.22 639.57 L1284.51 653.06 L1292.80 647.33 L1301.09 646.58 L1309.38 652.13 L1317.66 649.31 L1325.95 645.00 L1334.24 653.42 L1342.53 643.28 L1350.81 653.80 L1359.10 652.12 L1367.39 644.91 L1375.67 651.25 L1383.96 648.31 L1392.25 648.96 L1400.54 644.64 L1408.83 648.27 L1417.11 651.81 L1425.40 643.69 L1433.69 649.00 L1441.97 648.51 L1450.26 655.18 L1458.55 646.72 L1466.84 642.73 L1475.12 654.76 L1483.41 661.66 L1491.70 656.25 L1499.99 652.94 L1508.28 657.73 L1516.56 646.26 L1524.85 648.11 L1533.14 648.59 L1541.42 645.03 L1549.71 640.36 L1558.00 644.48 L1566.29 642.36 L1574.58 653.92 L1582.86 653.76 L1591.15 651.26 L1599.44 656.40 L1607.72 657.13 L1616.01 655.68 L1624.30 658.48 L1632.59 656.20 L1640.88 663.92 L1649.16 661.58 L1657.45 637.47 L1665.74 663.33 L1674.03 653.00 L1682.31 650.85 L1690.60 654.70 L1698.89 652.33 L1707.17 639.81 L1715.46 660.34 L1723.75 647.27 L1732.04 639.63" fill="none" stroke="#508642" stroke-width="1" stroke-linejoin="round"/>
<path d="M1227.00 654.26 L1234.79 649.63 L1243.08 650.25 L1251.36 649.64 L1259.65 632.26 L1267.94 647.29 L1276.22 635.90 L1284.51 646.78 L1292.80 644.32 L1301.09 653.59 L1309.38 645.58 L1317.66 636.58 L1325.95 646.15 L1334.24 656.61 L1342.53 647.33 L1350.81 650.87 L1359.10 658.03 L1367.39 649.87 L1375.67 654.87 L1383.96 656.05 L1392.25 645.41 L1400.54 640.81 L1408.83 639.34 L1417.11 650.86 L1425.40 651.77 L1433.69 653.42 L1441.97 653.24 L1450.26 644.63 L1458.55 650.88 L1466.84 642.90 L1475.12 647.44 L1483.41 666.68 L1491.70 655.46 L1499.99 652.92 L1508.28 660.69 L1516.56 648.33 L1524.85 638.37 L1533.14 651.36 L1541.42 638.49 L1549.71 639.86 L1558.00 641.86 L1566.29 648.71 L1574.58 650.58 L1582.86 651.42 L1591.15 640.98 L1599.44 656.39 L1607.72 656.45 L1616.01 648.65 L1624.30 660.68 L1632.59 653.63 L1640.88 663.84 L1649.16 660.97 L1657.45 642.32 L1665.74 655.78 L1674.03 648.50 L1682.31 650.13 L1690.60 662.01 L1698.89 655.91 L1707.17 649.18 L1715.46 660.90 L1723.75 644.46 L1732.04 652.42" fill="none" stroke="#CCA300" stroke-width="1" stroke-linejoin="round"/>
<path d="M1227.00 653.29 L1234.79 637.33 L1243.08 646.39 L1251.36 644.61 L1259.65 637.77 L1267.94 651.92 L1276.22 646.15 L1284.51 645.19 L1292.80 644.11 L1301.09 651.57 L1309.38 644.62 L1317.66 642.79 L1325.95 644.73 L1334.24 648.56 L1342.53 651.05 L1350.81 648.44 L1359.10 652.49 L1367.39 637.91 L1375.67 657.87 L1383.96 648.41 L1392.25 641.31 L1400.54 648.07 L1408.83 642.90 L1417.11 642.34 L1425.40 652.77 L1433.69 653.64 L1441.97 648.64 L1450.26 649.06 L1458.55 657.38 L1466.84 644.36 L1475.12 642.17 L1483.41 655.95 L1491.70 655.80 L1499.99 652.93 L1508.28 662.37 L1516.56 650.16 L1524.85 652.21 L1533.14 650.40 L1541.42 648.01 L1549.71 639.02 L1558.00 648.95 L1566.29 645.50 L1574.58 654.75 L1582.86 651.61 L1591.15 644.85 L1599.44 652.35 L1607.72 646.98 L1616.01 649.51 L1624.30 663.58 L1632.59 649.58 L1640.88 660.06 L1649.16 655.91 L1657.45 644.43 L1665.74 654.18 L1674.03 641.57 L1682.31 651.06 L1690.60 651.20 L1698.89 646.13 L1707.17 641.73 L1715.46 659.28 L1723.75 645.50 L1732.04 647.69" fill="none" stroke="#447EBC" stroke-width="1" stroke-linejoin="round"/>
<path d="M1227.00 651.57 L1234.79 641.98 L1243.08 639.75 L1251.36 651.83 L1259.65 639.52 L1267.94 642.42 L1276.22 643.98 L1284.51 655.05 L1292.80 642.57 L1301.09 652.77 L1309.38 652.99 L1317.66 641.53 L1325.95 647.21 L1334.24 646.38 L1342.53 640.93 L1350.81 648.56 L1359.10 653.58 L1367.39 640.79 L1375.67 653.10 L1383.96 647.56 L1392.25 639.31 L1400.54 637.82 L1408.83 636.00 L1417.11 639.99 L1425.40 647.21 L1433.69 643.47 L1441.97 644.63 L1450.26 653.93 L1458.55 652.48 L1466.84 637.60 L1475.12 655.94 L1483.41 665.32 L1491.70 647.12 L1499.99 656.27 L1508.28 661.23 L1516.56 638.55 L1524.85 646.80 L1533.14 658.18 L1541.42 638.41 L1549.71 633.38 L1558.00 647.91 L1566.29 637.77 L1574.58 654.50 L1582.86 658.98 L1591.15 638.97 L1599.44 651.35 L1607.72 654.52 L1616.01 646.03 L1624.30 660.75 L1632.59 652.81 L1640.88 655.46 L1649.16 653.95 L1657.45 639.83 L1665.74 653.79 L1674.03 646.38 L1682.31 655.54 L1690.60 651.29 L1698.89 648.50 L1707.17 642.02 L1715.46 652.71 L1723.75 652.10 L1732.04 652.99" fill="none" stroke="#C15C17" stroke-width="1" stroke-linejoin="round"/>
<path d="M1227.00 649.41 L1234.79 645.81 L1243.08 647.07 L1251.36 647.07 L1259.65 642.22 L1267.94 651.20 L1276.22 643.12 L1284.51 648.87 L1292.80 648.87 L1301.09 650.31 L1309.38 647.07 L1317.66 647.07 L1325.95 648.15 L1334.24 652.10 L1342.53 647.61 L1350.81 653.00 L1359.10 653.90 L1367.39 646.35 L1375.67 655.16 L1383.96 652.10 L1392.25 648.51 L1400.54 644.02 L1408.83 644.02 L1417.11 648.51 L1425.40 647.61 L1433.69 651.20 L1441.97 651.20 L1450.26 651.74 L1458.55 652.88 L1466.84 646.05 L1475.12 650.19 L1483.41 663.66 L1491.70 653.78 L1499.99 651.98 L1508.28 662.76 L1516.56 646.59 L1524.85 649.29 L1533.14 651.98 L1541.42 647.49 L1549.71 642.10 L1558.00 649.29 L1566.29 646.05 L1574.58 652.88 L1582.86 654.68 L1591.15 649.29 L1599.44 653.78 L1607.72 651.98 L1616.01 651.98 L1624.30 659.17 L1632.59 651.98 L1640.88 663.66 L1649.16 657.37 L1657.45 642.10 L1665.74 659.17 L1674.03 651.98 L1682.31 652.88 L1690.60 659.17 L1698.89 652.88 L1707.17 649.29 L1715.46 660.07 L1723.75 649.29 L1732.04 650.19" fill="none" stroke="#b01c0c" stroke-width="1.15" stroke-linejoin="round"/>
<rect x="1227" y="833" width="506.00" height="1.4" fill="#7a8f60"/>
<text x="1221.80" y="625.90" font-size="12" text-anchor="end" font-weight="normal" fill="#ccccdc" textLength="28.65" lengthAdjust="spacingAndGlyphs">100%</text>
<text x="1221.80" y="678.40" font-size="12" text-anchor="end" font-weight="normal" fill="#ccccdc" textLength="21.91" lengthAdjust="spacingAndGlyphs">75%</text>
<text x="1221.80" y="730.90" font-size="12" text-anchor="end" font-weight="normal" fill="#ccccdc" textLength="21.91" lengthAdjust="spacingAndGlyphs">50%</text>
<text x="1221.80" y="783.40" font-size="12" text-anchor="end" font-weight="normal" fill="#ccccdc" textLength="21.91" lengthAdjust="spacingAndGlyphs">25%</text>
<text x="1221.80" y="835.90" font-size="12" text-anchor="end" font-weight="normal" fill="#ccccdc" textLength="15.18" lengthAdjust="spacingAndGlyphs">0%</text>
<text x="1259.30" y="851.90" font-size="12" text-anchor="middle" font-weight="normal" fill="#ccccdc" textLength="29.86" lengthAdjust="spacingAndGlyphs">15:14</text>
<text x="1358.30" y="851.90" font-size="12" text-anchor="middle" font-weight="normal" fill="#ccccdc" textLength="29.86" lengthAdjust="spacingAndGlyphs">15:16</text>
<text x="1458.30" y="851.90" font-size="12" text-anchor="middle" font-weight="normal" fill="#ccccdc" textLength="29.86" lengthAdjust="spacingAndGlyphs">15:18</text>
<text x="1558.30" y="851.90" font-size="12" text-anchor="middle" font-weight="normal" fill="#ccccdc" textLength="29.86" lengthAdjust="spacingAndGlyphs">15:20</text>
<text x="1657.30" y="851.90" font-size="12" text-anchor="middle" font-weight="normal" fill="#ccccdc" textLength="29.86" lengthAdjust="spacingAndGlyphs">15:22</text>
<rect x="1202.00" y="871.00" width="14" height="4" rx="1" fill="#7EB26D"/>
<text x="1224.20" y="875.70" font-size="12" text-anchor="start" font-weight="normal" fill="#ccccdc" textLength="19.94" lengthAdjust="spacingAndGlyphs">sda</text>
<text x="1250.24" y="875.70" font-size="12" text-anchor="start" font-weight="normal" fill="#ccccdc" textLength="75.87" lengthAdjust="spacingAndGlyphs">Max: 0.0400%</text>
<text x="1332.21" y="875.70" font-size="12" text-anchor="start" font-weight="normal" fill="#ccccdc" textLength="87.03" lengthAdjust="spacingAndGlyphs">Avg: 0.000645%</text>
<rect x="1429.04" y="871.00" width="14" height="4" rx="1" fill="#EAB839"/>
<text x="1451.24" y="875.70" font-size="12" text-anchor="start" font-weight="normal" fill="#ccccdc" textLength="20.15" lengthAdjust="spacingAndGlyphs">sdb</text>
<text x="1477.49" y="875.70" font-size="12" text-anchor="start" font-weight="normal" fill="#ccccdc" textLength="62.07" lengthAdjust="spacingAndGlyphs">Max: 93.7%</text>
<text x="1545.67" y="875.70" font-size="12" text-anchor="start" font-weight="normal" fill="#ccccdc" textLength="59.43" lengthAdjust="spacingAndGlyphs">Avg: 86.3%</text>
<rect x="1202.00" y="889.00" width="14" height="4" rx="1" fill="#6ED0E0"/>
<text x="1224.20" y="893.70" font-size="12" text-anchor="start" font-weight="normal" fill="#ccccdc" textLength="19.71" lengthAdjust="spacingAndGlyphs">sdc</text>
<text x="1250.01" y="893.70" font-size="12" text-anchor="start" font-weight="normal" fill="#ccccdc" textLength="62.12" lengthAdjust="spacingAndGlyphs">Max: 92.9%</text>
<text x="1318.23" y="893.70" font-size="12" text-anchor="start" font-weight="normal" fill="#ccccdc" textLength="59.48" lengthAdjust="spacingAndGlyphs">Avg: 86.9%</text>
<rect x="1387.51" y="889.00" width="14" height="4" rx="1" fill="#EF843C"/>
<text x="1409.71" y="893.70" font-size="12" text-anchor="start" font-weight="normal" fill="#ccccdc" textLength="20.20" lengthAdjust="spacingAndGlyphs">sdd</text>
<text x="1436.01" y="893.70" font-size="12" text-anchor="start" font-weight="normal" fill="#ccccdc" textLength="62.12" lengthAdjust="spacingAndGlyphs">Max: 93.2%</text>
<text x="1504.23" y="893.70" font-size="12" text-anchor="start" font-weight="normal" fill="#ccccdc" textLength="59.48" lengthAdjust="spacingAndGlyphs">Avg: 87.3%</text>
<rect x="1573.51" y="889.00" width="14" height="4" rx="1" fill="#E24D42"/>
<text x="1595.71" y="893.70" font-size="12" text-anchor="start" font-weight="normal" fill="#ccccdc" textLength="19.78" lengthAdjust="spacingAndGlyphs">sde</text>
<text x="1621.60" y="893.70" font-size="12" text-anchor="start" font-weight="normal" fill="#ccccdc" textLength="62.12" lengthAdjust="spacingAndGlyphs">Max: 94.2%</text>
<text x="1689.82" y="893.70" font-size="12" text-anchor="start" font-weight="normal" fill="#ccccdc" textLength="59.48" lengthAdjust="spacingAndGlyphs">Avg: 87.3%</text>
<rect x="1202.00" y="907.00" width="14" height="4" rx="1" fill="#1F78C1"/>
<text x="1224.20" y="911.70" font-size="12" text-anchor="start" font-weight="normal" fill="#ccccdc" textLength="17.55" lengthAdjust="spacingAndGlyphs">sdf</text>
<text x="1247.85" y="911.70" font-size="12" text-anchor="start" font-weight="normal" fill="#ccccdc" textLength="62.16" lengthAdjust="spacingAndGlyphs">Max: 93.0%</text>
<text x="1316.11" y="911.70" font-size="12" text-anchor="start" font-weight="normal" fill="#ccccdc" textLength="59.51" lengthAdjust="spacingAndGlyphs">Avg: 86.2%</text>
<rect x="1385.42" y="907.00" width="14" height="4" rx="1" fill="#BA43A9"/>
<text x="1407.62" y="911.70" font-size="12" text-anchor="start" font-weight="normal" fill="#ccccdc" textLength="20.18" lengthAdjust="spacingAndGlyphs">sdg</text>
<text x="1433.90" y="911.70" font-size="12" text-anchor="start" font-weight="normal" fill="#ccccdc" textLength="62.16" lengthAdjust="spacingAndGlyphs">Max: 92.9%</text>
<text x="1502.16" y="911.70" font-size="12" text-anchor="start" font-weight="normal" fill="#ccccdc" textLength="59.51" lengthAdjust="spacingAndGlyphs">Avg: 87.6%</text>
<rect x="1571.47" y="907.00" width="14" height="4" rx="1" fill="#705DA0"/>
<text x="1593.67" y="911.70" font-size="12" text-anchor="start" font-weight="normal" fill="#ccccdc" textLength="20.05" lengthAdjust="spacingAndGlyphs">sdh</text>
<text x="1619.83" y="911.70" font-size="12" text-anchor="start" font-weight="normal" fill="#ccccdc" textLength="62.16" lengthAdjust="spacingAndGlyphs">Max: 93.2%</text>
<text x="1688.09" y="911.70" font-size="12" text-anchor="start" font-weight="normal" fill="#ccccdc" textLength="59.51" lengthAdjust="spacingAndGlyphs">Avg: 87.3%</text>
<rect x="1202.00" y="925.00" width="14" height="4" rx="1" fill="#508642"/>
<text x="1224.20" y="929.70" font-size="12" text-anchor="start" font-weight="normal" fill="#ccccdc" textLength="16.25" lengthAdjust="spacingAndGlyphs">sdi</text>
<text x="1246.55" y="929.70" font-size="12" text-anchor="start" font-weight="normal" fill="#ccccdc" textLength="62.11" lengthAdjust="spacingAndGlyphs">Max: 91.9%</text>
<text x="1314.76" y="929.70" font-size="12" text-anchor="start" font-weight="normal" fill="#ccccdc" textLength="59.47" lengthAdjust="spacingAndGlyphs">Avg: 86.0%</text>
<rect x="1384.03" y="925.00" width="14" height="4" rx="1" fill="#CCA300"/>
<text x="1406.23" y="929.70" font-size="12" text-anchor="start" font-weight="normal" fill="#ccccdc" textLength="16.20" lengthAdjust="spacingAndGlyphs">sdj</text>
<text x="1428.54" y="929.70" font-size="12" text-anchor="start" font-weight="normal" fill="#ccccdc" textLength="62.11" lengthAdjust="spacingAndGlyphs">Max: 91.9%</text>
<text x="1496.75" y="929.70" font-size="12" text-anchor="start" font-weight="normal" fill="#ccccdc" textLength="59.47" lengthAdjust="spacingAndGlyphs">Avg: 86.2%</text>
<rect x="1566.02" y="925.00" width="14" height="4" rx="1" fill="#447EBC"/>
<text x="1588.22" y="929.70" font-size="12" text-anchor="start" font-weight="normal" fill="#ccccdc" textLength="19.50" lengthAdjust="spacingAndGlyphs">sdk</text>
<text x="1613.82" y="929.70" font-size="12" text-anchor="start" font-weight="normal" fill="#ccccdc" textLength="62.11" lengthAdjust="spacingAndGlyphs">Max: 96.1%</text>
<text x="1682.03" y="929.70" font-size="12" text-anchor="start" font-weight="normal" fill="#ccccdc" textLength="59.47" lengthAdjust="spacingAndGlyphs">Avg: 86.5%</text>
<rect x="1202.00" y="943.00" width="14" height="4" rx="1" fill="#C15C17"/>
<text x="1224.20" y="947.70" font-size="12" text-anchor="start" font-weight="normal" fill="#ccccdc" textLength="16.23" lengthAdjust="spacingAndGlyphs">sdl</text>
<text x="1246.53" y="947.70" font-size="12" text-anchor="start" font-weight="normal" fill="#ccccdc" textLength="62.04" lengthAdjust="spacingAndGlyphs">Max: 95.0%</text>
<text x="1314.68" y="947.70" font-size="12" text-anchor="start" font-weight="normal" fill="#ccccdc" textLength="59.40" lengthAdjust="spacingAndGlyphs">Avg: 87.4%</text>
<rect x="1383.88" y="943.00" width="14" height="4" rx="1" fill="#890F02"/>
<text x="1406.08" y="947.70" font-size="12" text-anchor="start" font-weight="normal" fill="#ccccdc" textLength="30.68" lengthAdjust="spacingAndGlyphs">Mean</text>
<text x="1442.86" y="947.70" font-size="12" text-anchor="start" font-weight="normal" fill="#ccccdc" textLength="62.04" lengthAdjust="spacingAndGlyphs">Max: 91.5%</text>
<text x="1511.00" y="947.70" font-size="12" text-anchor="start" font-weight="normal" fill="#ccccdc" textLength="59.40" lengthAdjust="spacingAndGlyphs">Avg: 86.8%</text>
<path d="M1761.2 954 v4.2 h-4.2" fill="none" stroke="#5e6067" stroke-width="1.7"/>
</svg></div>
<div class="panel" style="left:593.67px;top:970px;width:581.66px;height:60px"></div>
<div class="panel" style="left:1183.33px;top:970px;width:581.67px;height:60px"></div>
<div class="panel" style="left:4px;top:970px;width:581.67px;height:60px"></div>
</body></html>
